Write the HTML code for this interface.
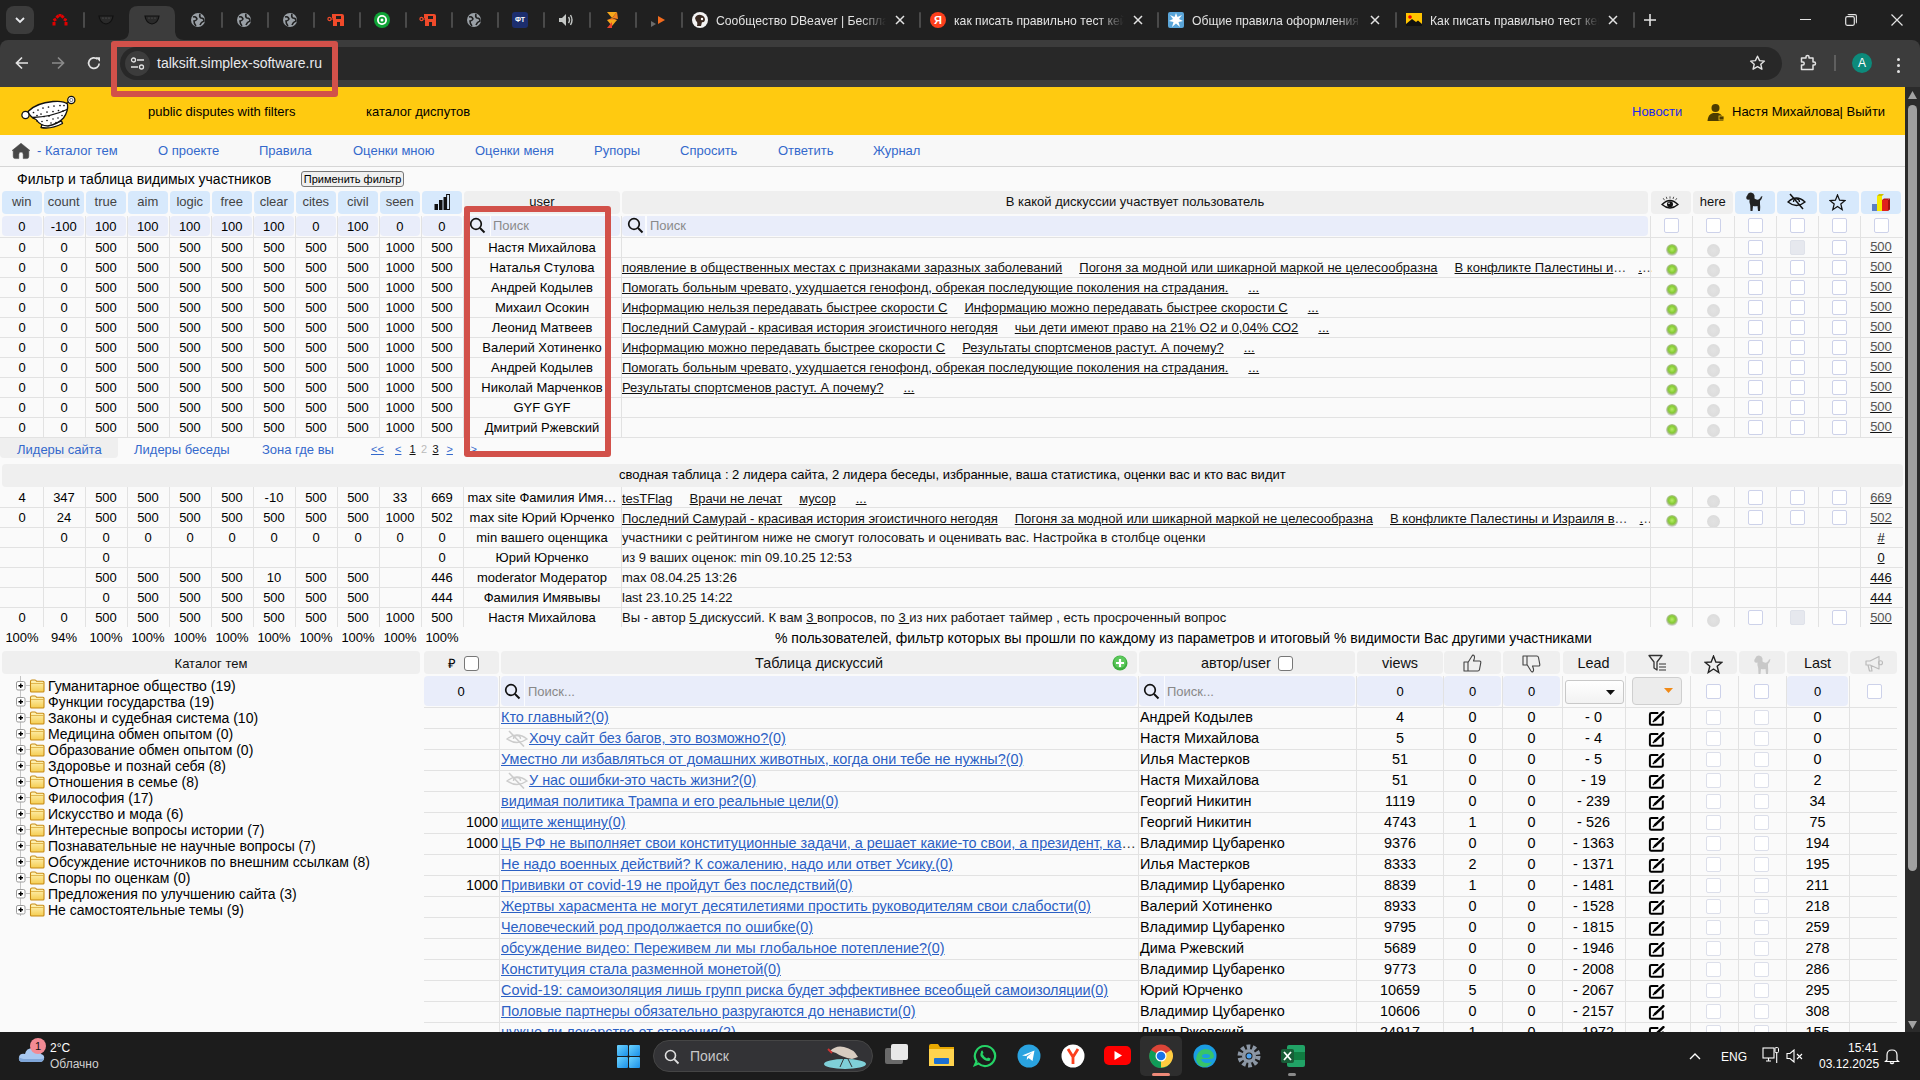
<!DOCTYPE html><html><head><meta charset="utf-8"><title>talksift</title><style>
*{box-sizing:border-box}
html,body{margin:0;padding:0}
body{width:1920px;height:1080px;overflow:hidden;position:relative;background:#fafafa;font-family:"Liberation Sans",sans-serif;color:#000}
div{position:absolute}
.t{white-space:nowrap}
.c{text-align:center;white-space:nowrap;overflow:hidden}
.u{text-decoration:underline}
.hb{background:#d7e9fc;border-radius:4px}
.hg{background:#efefef;border-radius:4px}
.fl{background:#e9edfa;border-radius:4px}
.vl{background:#e2e2e2;width:1px}
.hl{background:#e2e2e2;height:1px}
.cb{width:15px;height:15px;border:1px solid #cdd2ea;border-radius:2px;background:#fff}
.gd{width:12px;height:12px;border-radius:50%;background:radial-gradient(circle at 50% 45%,#b8ee6a 0,#86cc34 38%,#9fc070 52%,#d6d6d6 68%,#e4e4e4 100%)}
.gy{width:13px;height:13px;border-radius:50%;background:radial-gradient(circle at 50% 50%,#e2e2e2 0,#dcdcdc 70%,#e6e6e6 100%)}
a{color:inherit}
</style></head><body>
<div style="left:0px;top:0px;width:1920px;height:40px;background:#202020"></div>
<div style="left:6px;top:6px;width:28px;height:28px;background:#3c3c3c;border-radius:8px"></div>
<svg style="position:absolute;left:14px;top:15px" width="12" height="10" viewBox="0 0 12 10"><path d="M2 3 L6 7 L10 3" fill="none" stroke="#e8eaed" stroke-width="1.8"/></svg>
<svg style="position:absolute;left:120px;top:6px" width="64" height="34" viewBox="0 0 64 34"><path d="M0 34 Q8 34 9 26 L9 9 Q9 0 18 0 L46 0 Q55 0 55 9 L55 26 Q56 34 64 34 Z" fill="#3c3c3c"/></svg>
<div style="left:83px;top:12px;width:2px;height:16px;background:#4a4a4a;border-radius:1px"></div>
<div style="left:221px;top:12px;width:2px;height:16px;background:#4a4a4a;border-radius:1px"></div>
<div style="left:267px;top:12px;width:2px;height:16px;background:#4a4a4a;border-radius:1px"></div>
<div style="left:313px;top:12px;width:2px;height:16px;background:#4a4a4a;border-radius:1px"></div>
<div style="left:359px;top:12px;width:2px;height:16px;background:#4a4a4a;border-radius:1px"></div>
<div style="left:405px;top:12px;width:2px;height:16px;background:#4a4a4a;border-radius:1px"></div>
<div style="left:451px;top:12px;width:2px;height:16px;background:#4a4a4a;border-radius:1px"></div>
<div style="left:497px;top:12px;width:2px;height:16px;background:#4a4a4a;border-radius:1px"></div>
<div style="left:543px;top:12px;width:2px;height:16px;background:#4a4a4a;border-radius:1px"></div>
<div style="left:589px;top:12px;width:2px;height:16px;background:#4a4a4a;border-radius:1px"></div>
<div style="left:635px;top:12px;width:2px;height:16px;background:#4a4a4a;border-radius:1px"></div>
<div style="left:681px;top:12px;width:2px;height:16px;background:#4a4a4a;border-radius:1px"></div>
<div style="left:919px;top:12px;width:2px;height:16px;background:#4a4a4a;border-radius:1px"></div>
<div style="left:1157px;top:12px;width:2px;height:16px;background:#4a4a4a;border-radius:1px"></div>
<div style="left:1395px;top:12px;width:2px;height:16px;background:#4a4a4a;border-radius:1px"></div>
<div style="left:1633px;top:12px;width:2px;height:16px;background:#4a4a4a;border-radius:1px"></div>
<svg style="position:absolute;left:51px;top:13px" width="18" height="13" viewBox="0 0 18 13"><g fill="#e00000"><rect x="1.5" y="9" width="3" height="3.5"/><rect x="13.5" y="9" width="3" height="3.5"/><rect x="2.3" y="5.2" width="3" height="3" transform="rotate(-30 3.8 6.7)"/><rect x="12.7" y="5.2" width="3" height="3" transform="rotate(30 14.2 6.7)"/><rect x="5" y="2.2" width="3" height="3" transform="rotate(-45 6.5 3.7)"/><rect x="10" y="2.2" width="3" height="3" transform="rotate(45 11.5 3.7)"/><rect x="7.5" y="1" width="3" height="2.6"/></g></svg>
<svg style="position:absolute;left:98px;top:14px" width="16" height="11" viewBox="0 0 16 11"><path d="M1 2 L15 2 Q14 9 8 10 Q2 9 1 2 Z" fill="#2a2a2a" stroke="#111" stroke-width="1.2"/><circle cx="5" cy="4" r="0.6" fill="#666"/><circle cx="8" cy="4" r="0.6" fill="#666"/><circle cx="11" cy="4" r="0.6" fill="#666"/></svg>
<svg style="position:absolute;left:144px;top:14px" width="16" height="11" viewBox="0 0 16 11"><path d="M1 2 L15 2 Q14 9 8 10 Q2 9 1 2 Z" fill="#2a2a2a" stroke="#111" stroke-width="1.2"/><circle cx="5" cy="4" r="0.6" fill="#666"/><circle cx="8" cy="4" r="0.6" fill="#666"/><circle cx="11" cy="4" r="0.6" fill="#666"/></svg>
<svg style="position:absolute;left:191px;top:13px" width="14" height="14" viewBox="0 0 14 14"><circle cx="7" cy="7" r="7" fill="#9aa0a6"/><path d="M2 4 Q5 3 6 6 Q5 8 3 8 Q3 11 5 13 M9 1 Q8 4 10 5 Q13 5 13 8 Q10 9 9 12" fill="none" stroke="#202020" stroke-width="1.6"/></svg>
<svg style="position:absolute;left:237px;top:13px" width="14" height="14" viewBox="0 0 14 14"><circle cx="7" cy="7" r="7" fill="#9aa0a6"/><path d="M2 4 Q5 3 6 6 Q5 8 3 8 Q3 11 5 13 M9 1 Q8 4 10 5 Q13 5 13 8 Q10 9 9 12" fill="none" stroke="#202020" stroke-width="1.6"/></svg>
<svg style="position:absolute;left:283px;top:13px" width="14" height="14" viewBox="0 0 14 14"><circle cx="7" cy="7" r="7" fill="#9aa0a6"/><path d="M2 4 Q5 3 6 6 Q5 8 3 8 Q3 11 5 13 M9 1 Q8 4 10 5 Q13 5 13 8 Q10 9 9 12" fill="none" stroke="#202020" stroke-width="1.6"/></svg>
<svg style="position:absolute;left:467px;top:13px" width="14" height="14" viewBox="0 0 14 14"><circle cx="7" cy="7" r="7" fill="#9aa0a6"/><path d="M2 4 Q5 3 6 6 Q5 8 3 8 Q3 11 5 13 M9 1 Q8 4 10 5 Q13 5 13 8 Q10 9 9 12" fill="none" stroke="#202020" stroke-width="1.6"/></svg>
<svg style="position:absolute;left:327px;top:12px" width="18" height="15" viewBox="0 0 18 15"><path d="M5 2 L15 2 Q17 2 17 4 L17 14 L13 14 L13 10 L10 10 L10 14 L6 14 L6 6 L5 6 Z" fill="#f04a2a"/><circle cx="2.5" cy="7" r="1.6" fill="none" stroke="#f04a2a" stroke-width="1.2"/><path d="M4 7 L6 7" stroke="#f04a2a" stroke-width="1.2"/><rect x="9" y="4" width="5" height="3" fill="#202020"/></svg>
<svg style="position:absolute;left:419px;top:12px" width="18" height="15" viewBox="0 0 18 15"><path d="M5 2 L15 2 Q17 2 17 4 L17 14 L13 14 L13 10 L10 10 L10 14 L6 14 L6 6 L5 6 Z" fill="#f04a2a"/><circle cx="2.5" cy="7" r="1.6" fill="none" stroke="#f04a2a" stroke-width="1.2"/><path d="M4 7 L6 7" stroke="#f04a2a" stroke-width="1.2"/><rect x="9" y="4" width="5" height="3" fill="#202020"/></svg>
<svg style="position:absolute;left:374px;top:12px" width="16" height="16" viewBox="0 0 16 16"><circle cx="8" cy="8" r="8" fill="#0fa336"/><circle cx="8" cy="8" r="5" fill="#fff"/><circle cx="8" cy="8" r="3.2" fill="#0fa336"/><circle cx="8" cy="8" r="1.5" fill="#fff"/></svg>
<div style="left:512px;top:12px;width:16px;height:16px;background:#1c2e6e;border-radius:3px"><div style="left:0;top:3px;width:16px;font-size:7px;font-weight:bold;color:#fff;text-align:center;line-height:9px">ФТ</div></div>
<svg style="position:absolute;left:558px;top:13px" width="16" height="14" viewBox="0 0 16 14"><path d="M1 5 L4 5 L8 1 L8 13 L4 9 L1 9 Z" fill="#c4c7c5"/><path d="M10.5 4 Q12.5 7 10.5 10 M12.5 2 Q15.5 7 12.5 12" fill="none" stroke="#c4c7c5" stroke-width="1.4"/></svg>
<svg style="position:absolute;left:604px;top:11px" width="16" height="18" viewBox="0 0 16 18"><path d="M3 1 L13 1 L8 7 Z" fill="#f7a81b"/><path d="M8 7 L13 1 L14 8 Z" fill="#f58220"/><path d="M3 9 L13 9 L8 15 Z" fill="#f7a81b"/><path d="M3 17 L8 11 L8 17 Z" fill="#e8412c"/><path d="M8 7 L3 9 L13 9Z" fill="#f58220"/></svg>
<svg style="position:absolute;left:650px;top:12px" width="16" height="16" viewBox="0 0 16 16"><path d="M1 9 L6 12 L1 15 Z" fill="#6b6b6b"/><path d="M8 4 L15 8 L8 12 Z" fill="#f26b1d"/></svg>
<svg style="position:absolute;left:692px;top:12px" width="16" height="16" viewBox="0 0 16 16"><circle cx="8" cy="8" r="8" fill="#f3f3f3"/><path d="M3 6 Q5 2 9 3 Q13 4 13 8 Q12 11 10 10 L9 14 L5 14 Q6 10 4 9Z" fill="#3a2a22"/><circle cx="10" cy="7" r="1.2" fill="#fff"/></svg>
<div class="t" style="left:716px;top:13px;width:170px;overflow:hidden;font-size:12.2px;line-height:16px;color:#e3e3e3;-webkit-mask-image:linear-gradient(90deg,#000 85%,transparent 100%)">Сообщество DBeaver | Бесплат</div>
<svg style="position:absolute;left:895px;top:15px" width="10" height="10" viewBox="0 0 10 10"><path d="M1 1 L9 9 M9 1 L1 9" stroke="#e3e3e3" stroke-width="1.5"/></svg>
<div style="left:930px;top:12px;width:16px;height:16px;border-radius:50%;background:#fc3f1d;color:#fff;font-size:11px;line-height:16px;text-align:center;font-weight:bold">Я</div>
<div class="t" style="left:954px;top:13px;width:170px;overflow:hidden;font-size:12.2px;line-height:16px;color:#e3e3e3;-webkit-mask-image:linear-gradient(90deg,#000 85%,transparent 100%)">как писать правильно тест кей</div>
<svg style="position:absolute;left:1133px;top:15px" width="10" height="10" viewBox="0 0 10 10"><path d="M1 1 L9 9 M9 1 L1 9" stroke="#e3e3e3" stroke-width="1.5"/></svg>
<div style="left:1168px;top:12px;width:16px;height:16px;border-radius:2px;background:#5aa5d8"></div>
<svg style="position:absolute;left:1169px;top:13px" width="14" height="14" viewBox="0 0 14 14"><path d="M7 0 L8.5 4 L13 2 L10 6 L14 8 L9.5 9 L11 14 L7 10.5 L3 14 L4.5 9 L0 8 L4 6 L1 2 L5.5 4Z" fill="#fff"/></svg>
<div class="t" style="left:1192px;top:13px;width:169px;overflow:hidden;font-size:12.2px;line-height:16px;color:#e3e3e3;-webkit-mask-image:linear-gradient(90deg,#000 85%,transparent 100%)">Общие правила оформления т</div>
<svg style="position:absolute;left:1370px;top:15px" width="10" height="10" viewBox="0 0 10 10"><path d="M1 1 L9 9 M9 1 L1 9" stroke="#e3e3e3" stroke-width="1.5"/></svg>
<div style="left:1406px;top:13px;width:16px;height:13px;background:#ffc400"></div>
<svg style="position:absolute;left:1406px;top:13px" width="16" height="13" viewBox="0 0 16 13"><path d="M0 13 L0 11 L6 6 L10 9 L12 7.5 L16 11 L16 13Z" fill="#111"/><circle cx="4" cy="4" r="1.8" fill="#e00"/></svg>
<div class="t" style="left:1430px;top:13px;width:169px;overflow:hidden;font-size:12.2px;line-height:16px;color:#e3e3e3;-webkit-mask-image:linear-gradient(90deg,#000 85%,transparent 100%)">Как писать правильно тест кей</div>
<svg style="position:absolute;left:1608px;top:15px" width="10" height="10" viewBox="0 0 10 10"><path d="M1 1 L9 9 M9 1 L1 9" stroke="#e3e3e3" stroke-width="1.5"/></svg>
<svg style="position:absolute;left:1644px;top:14px" width="12" height="12" viewBox="0 0 12 12"><path d="M6 0 V12 M0 6 H12" stroke="#e3e3e3" stroke-width="1.6"/></svg>
<div style="left:1800px;top:19px;width:11px;height:1px;background:#e3e3e3"></div>
<svg style="position:absolute;left:1845px;top:14px" width="12" height="12" viewBox="0 0 12 12"><rect x="0.7" y="2.7" width="8.6" height="8.6" rx="1.5" fill="none" stroke="#e3e3e3" stroke-width="1.2"/><path d="M3 1 Q3 0.6 4 0.6 L10 0.6 Q11.4 0.6 11.4 2 L11.4 8 Q11.4 9 11 9" fill="none" stroke="#e3e3e3" stroke-width="1.1"/></svg>
<svg style="position:absolute;left:1891px;top:14px" width="12" height="12" viewBox="0 0 12 12"><path d="M0.5 0.5 L11.5 11.5 M11.5 0.5 L0.5 11.5" stroke="#e3e3e3" stroke-width="1.2"/></svg>
<div style="left:0px;top:40px;width:1920px;height:47px;background:#202020"></div>
<div style="left:0px;top:40px;width:1920px;height:47px;background:#3c3c3c;border-radius:8px 8px 0 0"></div>
<svg style="position:absolute;left:14px;top:55px" width="16" height="16" viewBox="0 0 16 16"><path d="M14 8 H2.5 M8 2.5 L2.5 8 L8 13.5" fill="none" stroke="#e3e3e3" stroke-width="1.7"/></svg>
<svg style="position:absolute;left:50px;top:55px" width="16" height="16" viewBox="0 0 16 16"><path d="M2 8 H13.5 M8 2.5 L13.5 8 L8 13.5" fill="none" stroke="#8a8a8a" stroke-width="1.7"/></svg>
<svg style="position:absolute;left:86px;top:55px" width="16" height="16" viewBox="0 0 16 16"><path d="M13.2 8.5 A5.3 5.3 0 1 1 11.5 4.2" fill="none" stroke="#e3e3e3" stroke-width="1.7"/><path d="M9.5 2.2 L14 2.2 L14 6.7 Z" fill="#e3e3e3"/></svg>
<div style="left:120px;top:47px;width:1662px;height:33px;background:#282828;border-radius:17px"></div>
<div style="left:125px;top:51px;width:25px;height:25px;background:#3c3c3c;border-radius:50%"></div>
<svg style="position:absolute;left:130px;top:56px" width="15" height="15" viewBox="0 0 15 15"><circle cx="3.5" cy="4" r="2" fill="none" stroke="#e3e3e3" stroke-width="1.3"/><path d="M7 4 H14" stroke="#e3e3e3" stroke-width="1.5"/><circle cx="11.5" cy="11" r="2" fill="none" stroke="#e3e3e3" stroke-width="1.3"/><path d="M1 11 H8" stroke="#e3e3e3" stroke-width="1.5"/></svg>
<div class="t" style="left:157px;top:54px;font-size:14px;line-height:18px;color:#e8eaed">talksift.simplex-software.ru</div>
<svg style="position:absolute;left:1749px;top:55px" width="17" height="16" viewBox="0 0 17 16"><path d="M8.5 1.2 L10.6 5.6 L15.4 6.1 L11.8 9.3 L12.9 14.2 L8.5 11.7 L4.1 14.2 L5.2 9.3 L1.6 6.1 L6.4 5.6 Z" fill="none" stroke="#e3e3e3" stroke-width="1.4" stroke-linejoin="round"/></svg>
<svg style="position:absolute;left:1800px;top:54px" width="18" height="18" viewBox="0 0 18 18"><path d="M1.5 4 H6 V2.8 Q6 1.5 7.5 1.5 Q9 1.5 9 2.8 V4 H13 V8 H14.2 Q15.5 8 15.5 9.5 Q15.5 11 14.2 11 H13 V15.5 H1.5 V11 H3 Q4.2 11 4.2 9.5 Q4.2 8 3 8 H1.5 Z" fill="none" stroke="#e3e3e3" stroke-width="1.5" stroke-linejoin="round"/></svg>
<div style="left:1834px;top:55px;width:2px;height:16px;background:#5f5f5f"></div>
<div style="left:1852px;top:53px;width:20px;height:20px;background:#0d8a7b;border-radius:50%;color:#fff;font-size:12px;line-height:20px;text-align:center">A</div>
<div style="left:1896.5px;top:57.5px;width:3.2px;height:3.2px;background:#e3e3e3;border-radius:50%"></div>
<div style="left:1896.5px;top:63.5px;width:3.2px;height:3.2px;background:#e3e3e3;border-radius:50%"></div>
<div style="left:1896.5px;top:69.5px;width:3.2px;height:3.2px;background:#e3e3e3;border-radius:50%"></div>
<div style="left:0px;top:87px;width:1905px;height:48px;background:#ffca10"></div>
<svg style="position:absolute;left:15px;top:90px" width="70" height="45" viewBox="0 0 70 45">
<g stroke="#111" stroke-width="1.3" fill="#fff" stroke-linejoin="round">
<path d="M26 37.5 Q36 39.5 47.5 33.5 L46.5 31 Q37 35.5 27 34.5 Z"/>
<circle cx="10.5" cy="25" r="3.6"/>
<circle cx="56.3" cy="10" r="3.6"/>
<path d="M13 21.5 Q21 13 38 11.5 Q49 10.5 52.5 14 Q53.5 21 48.5 28 Q43 34 33 36 Q25 35.5 21 29.5 Q15 27 13 21.5 Z"/>
<path d="M17.5 27.5 Q36 27 52 19.5" fill="none"/>
<path d="M51 13.5 L54 12" fill="none"/>
</g>
<circle cx="9.5" cy="25.5" r="1.6" fill="#fff"/>
<circle cx="56.3" cy="10" r="1.6" fill="none" stroke="#555" stroke-width="0.8"/>
<g fill="#111">
<circle cx="18.5" cy="22.5" r="0.85"/><circle cx="23" cy="20" r="0.85"/><circle cx="28" cy="18" r="0.85"/><circle cx="33.5" cy="17" r="0.85"/><circle cx="39" cy="16" r="0.85"/><circle cx="45" cy="15.5" r="0.85"/><circle cx="49" cy="15.5" r="0.85"/>
<circle cx="22" cy="25.5" r="0.85"/><circle cx="26" cy="24" r="0.85"/><circle cx="32" cy="22" r="0.85"/><circle cx="38" cy="21.5" r="0.85"/><circle cx="43.5" cy="20.5" r="0.85"/><circle cx="48" cy="21" r="0.85"/><circle cx="29" cy="26.5" r="0.85"/><circle cx="34" cy="26" r="0.85"/>
<circle cx="22" cy="31" r="0.8"/><circle cx="27" cy="31.5" r="0.8"/><circle cx="32" cy="30.5" r="0.8"/><circle cx="38" cy="29" r="0.8"/><circle cx="43" cy="28" r="0.8"/><circle cx="47" cy="25.5" r="0.8"/><circle cx="36" cy="33" r="0.8"/><circle cx="41" cy="32.5" r="0.8"/>
</g></svg>
<div class="t" style="left:148px;top:104px;font-size:13px;line-height:16px;color:#000">public disputes with filters</div>
<div class="t" style="left:366px;top:104px;font-size:13px;line-height:16px;color:#000">каталог диспутов</div>
<div class="t" style="left:1632px;top:104px;font-size:13px;line-height:16px;color:#1c28ec">Новости</div>
<svg style="position:absolute;left:1707px;top:103px" width="18" height="18" viewBox="0 0 18 18"><circle cx="8.5" cy="5" r="4" fill="#4d3c00"/><path d="M0.5 18 Q1 11 6 10 L11 10 Q16 11 16.5 18Z" fill="#4d3c00"/><rect x="12" y="13" width="5" height="4" fill="#4d3c00" stroke="#ffca10" stroke-width="0.8"/></svg>
<div class="t" style="left:1732px;top:104px;font-size:13px;line-height:16px;color:#000">Настя Михайлова| Выйти</div>
<div style="left:0px;top:135px;width:1905px;height:32px;background:#f8f8f8;border-bottom:1px solid #d6d6d6"></div>
<svg style="position:absolute;left:11px;top:142px" width="20" height="18" viewBox="0 0 20 18"><path d="M10 1.2 L19 8.6 L17.8 8.6 L17.8 14.4 Q17.8 16.6 15.6 16.6 L12.2 16.6 L12.2 12.4 Q12.2 10.1 10 10.1 Q7.8 10.1 7.8 12.4 L7.8 16.6 L4.4 16.6 Q2.2 16.6 2.2 14.4 L2.2 8.6 L1 8.6 Z" fill="#484848" stroke="#484848" stroke-width="0.5" stroke-linejoin="round"/></svg>
<div class="t" style="left:37px;top:143px;font-size:13px;line-height:16px;color:#3469cc">- Каталог тем</div>
<div class="t" style="left:158px;top:143px;font-size:13px;line-height:16px;color:#3469cc">О проекте</div>
<div class="t" style="left:259px;top:143px;font-size:13px;line-height:16px;color:#3469cc">Правила</div>
<div class="t" style="left:353px;top:143px;font-size:13px;line-height:16px;color:#3469cc">Оценки мною</div>
<div class="t" style="left:475px;top:143px;font-size:13px;line-height:16px;color:#3469cc">Оценки меня</div>
<div class="t" style="left:594px;top:143px;font-size:13px;line-height:16px;color:#3469cc">Рупоры</div>
<div class="t" style="left:680px;top:143px;font-size:13px;line-height:16px;color:#3469cc">Спросить</div>
<div class="t" style="left:778px;top:143px;font-size:13px;line-height:16px;color:#3469cc">Ответить</div>
<div class="t" style="left:873px;top:143px;font-size:13px;line-height:16px;color:#3469cc">Журнал</div>
<div class="t" style="left:17px;top:171px;font-size:14px;line-height:16px">Фильтр и таблица видимых участников</div>
<div class="c" style="left:301px;top:171px;width:103px;height:16px;line-height:14px;font-size:11px;border:1px solid #777;border-radius:3px;background:#efefef;color:#000">Применить фильтр</div>
<div class="hb" style="left:2px;top:191px;width:39.5px;height:23px;"></div>
<div class="c" style="left:2px;top:191px;width:39.5px;height:21px;line-height:21px;font-size:13px;color:#444">win</div>
<div class="hb" style="left:44px;top:191px;width:39.5px;height:23px;"></div>
<div class="c" style="left:44px;top:191px;width:39.5px;height:21px;line-height:21px;font-size:13px;color:#444">count</div>
<div class="hb" style="left:86px;top:191px;width:39.5px;height:23px;"></div>
<div class="c" style="left:86px;top:191px;width:39.5px;height:21px;line-height:21px;font-size:13px;color:#444">true</div>
<div class="hb" style="left:128px;top:191px;width:39.5px;height:23px;"></div>
<div class="c" style="left:128px;top:191px;width:39.5px;height:21px;line-height:21px;font-size:13px;color:#444">aim</div>
<div class="hb" style="left:170px;top:191px;width:39.5px;height:23px;"></div>
<div class="c" style="left:170px;top:191px;width:39.5px;height:21px;line-height:21px;font-size:13px;color:#444">logic</div>
<div class="hb" style="left:212px;top:191px;width:39.5px;height:23px;"></div>
<div class="c" style="left:212px;top:191px;width:39.5px;height:21px;line-height:21px;font-size:13px;color:#444">free</div>
<div class="hb" style="left:254px;top:191px;width:39.5px;height:23px;"></div>
<div class="c" style="left:254px;top:191px;width:39.5px;height:21px;line-height:21px;font-size:13px;color:#444">clear</div>
<div class="hb" style="left:296px;top:191px;width:39.5px;height:23px;"></div>
<div class="c" style="left:296px;top:191px;width:39.5px;height:21px;line-height:21px;font-size:13px;color:#444">cites</div>
<div class="hb" style="left:338px;top:191px;width:39.5px;height:23px;"></div>
<div class="c" style="left:338px;top:191px;width:39.5px;height:21px;line-height:21px;font-size:13px;color:#444">civil</div>
<div class="hb" style="left:380px;top:191px;width:39.5px;height:23px;"></div>
<div class="c" style="left:380px;top:191px;width:39.5px;height:21px;line-height:21px;font-size:13px;color:#444">seen</div>
<div class="hb" style="left:422px;top:191px;width:39.5px;height:23px;"></div>
<svg style="position:absolute;left:434px;top:194px" width="16" height="16" viewBox="0 0 16 16"><rect x="0.5" y="10" width="3.5" height="6" fill="#111"/><rect x="5" y="6" width="3.5" height="10" fill="#111"/><rect x="9.5" y="3" width="3.5" height="13" fill="#111"/><rect x="12.6" y="0.5" width="3" height="15" fill="none" stroke="#111" stroke-width="1"/></svg>
<div class="hg" style="left:464px;top:191px;width:156px;height:23px;"></div>
<div class="c" style="left:464px;top:191px;width:156px;height:21px;line-height:21px;font-size:13px;color:#111">user</div>
<div class="hg" style="left:622px;top:191px;width:1026px;height:23px;"></div>
<div class="c" style="left:622px;top:191px;width:1026px;height:21px;line-height:21px;font-size:13px;color:#111">В какой дискуссии участвует пользователь</div>
<div class="hg" style="left:1651px;top:191px;width:39.5px;height:23px;"></div>
<div class="hg" style="left:1693px;top:191px;width:39.5px;height:23px;"></div>
<div class="hb" style="left:1735px;top:191px;width:39.5px;height:23px;"></div>
<div class="hb" style="left:1777px;top:191px;width:39.5px;height:23px;"></div>
<div class="hb" style="left:1819px;top:191px;width:39.5px;height:23px;"></div>
<div class="hb" style="left:1861px;top:191px;width:39.5px;height:23px;"></div>
<svg style="position:absolute;left:1661px;top:196px" width="18" height="13" viewBox="0 0 18 13"><path d="M1 8.5 Q9 0.5 17 8.5 Q9 15.5 1 8.5Z" fill="none" stroke="#111" stroke-width="1.3"/><circle cx="9" cy="8.3" r="3" fill="#111"/><circle cx="8" cy="7.3" r="0.8" fill="#fff"/><path d="M3.5 4.2 L2.2 2.2 M6 3 L5.3 0.8 M9 2.6 V0.4 M12 3 L12.7 0.8 M14.5 4.2 L15.8 2.2" stroke="#111" stroke-width="0.7"/></svg>
<div class="c" style="left:1693px;top:191px;width:39.5px;height:21px;line-height:21px;font-size:13px;color:#111">here</div>
<svg style="position:absolute;left:1745px;top:192px" width="18" height="20" viewBox="0 0 18 20"><path d="M2.5 3 Q3 0.5 6 0.5 Q9 0.8 9.5 3.5 L9.5 6.5 Q11 8 13.5 7.5 Q15.5 6.5 16 4.5 L17.5 4.2 Q17 7 15 9 L15 12 Q15.5 15 15 19 L13 19 L12.5 14 Q10 14.5 8 14 L7.5 19 L5.5 19 L5.2 13 Q4 10 4.5 7.5 Q2.5 8 1.5 7 Q0.5 5 2.5 3Z" fill="#222"/></svg>
<svg style="position:absolute;left:1787px;top:193px" width="19" height="17" viewBox="0 0 19 17"><path d="M1 9 Q9.5 1 18 9 Q9.5 16 1 9Z" fill="none" stroke="#111" stroke-width="1.3"/><path d="M6.5 9 Q6.5 5.8 9.5 5.8 Q12.5 5.8 12.5 9" fill="none" stroke="#111" stroke-width="1.3"/><path d="M3 1 L16 16" stroke="#111" stroke-width="1.5"/></svg>
<svg style="position:absolute;left:1829px;top:194px" width="17" height="17" viewBox="0 0 18 18"><path d="M9 1 L11.2 6.6 L17 6.9 L12.5 10.6 L14 16.6 L9 13.3 L4 16.6 L5.5 10.6 L1 6.9 L6.8 6.6 Z" fill="none" stroke="#111" stroke-width="1.3" stroke-linejoin="miter"/></svg>
<svg style="position:absolute;left:1871px;top:194px" width="20" height="17" viewBox="0 0 20 17"><rect x="1" y="10" width="5" height="7" fill="#5b7fc4"/><rect x="6" y="2" width="5" height="15" fill="#f6ea00"/><path d="M6 2 L8 0 L13 0 L11 2Z" fill="#cfc000"/><rect x="11" y="6" width="6" height="11" fill="#e0201c"/><path d="M17 6 L19 4.5 L19 15.5 L17 17Z" fill="#a01010"/><path d="M11 6 L13 4.5 L19 4.5 L17 6Z" fill="#b81818"/></svg>
<div class="fl" style="left:2px;top:216px;width:39.5px;height:20px;"></div>
<div class="c" style="left:2px;top:216px;width:39.5px;height:20px;line-height:20px;font-size:13px;line-height:21px">0</div>
<div class="fl" style="left:44px;top:216px;width:39.5px;height:20px;"></div>
<div class="c" style="left:44px;top:216px;width:39.5px;height:20px;line-height:20px;font-size:13px;line-height:21px">-100</div>
<div class="fl" style="left:86px;top:216px;width:39.5px;height:20px;"></div>
<div class="c" style="left:86px;top:216px;width:39.5px;height:20px;line-height:20px;font-size:13px;line-height:21px">100</div>
<div class="fl" style="left:128px;top:216px;width:39.5px;height:20px;"></div>
<div class="c" style="left:128px;top:216px;width:39.5px;height:20px;line-height:20px;font-size:13px;line-height:21px">100</div>
<div class="fl" style="left:170px;top:216px;width:39.5px;height:20px;"></div>
<div class="c" style="left:170px;top:216px;width:39.5px;height:20px;line-height:20px;font-size:13px;line-height:21px">100</div>
<div class="fl" style="left:212px;top:216px;width:39.5px;height:20px;"></div>
<div class="c" style="left:212px;top:216px;width:39.5px;height:20px;line-height:20px;font-size:13px;line-height:21px">100</div>
<div class="fl" style="left:254px;top:216px;width:39.5px;height:20px;"></div>
<div class="c" style="left:254px;top:216px;width:39.5px;height:20px;line-height:20px;font-size:13px;line-height:21px">100</div>
<div class="fl" style="left:296px;top:216px;width:39.5px;height:20px;"></div>
<div class="c" style="left:296px;top:216px;width:39.5px;height:20px;line-height:20px;font-size:13px;line-height:21px">0</div>
<div class="fl" style="left:338px;top:216px;width:39.5px;height:20px;"></div>
<div class="c" style="left:338px;top:216px;width:39.5px;height:20px;line-height:20px;font-size:13px;line-height:21px">100</div>
<div class="fl" style="left:380px;top:216px;width:39.5px;height:20px;"></div>
<div class="c" style="left:380px;top:216px;width:39.5px;height:20px;line-height:20px;font-size:13px;line-height:21px">0</div>
<div class="fl" style="left:422px;top:216px;width:39.5px;height:20px;"></div>
<div class="c" style="left:422px;top:216px;width:39.5px;height:20px;line-height:20px;font-size:13px;line-height:21px">0</div>
<div class="fl" style="left:464px;top:216px;width:156px;height:20px;"></div>
<div style="left:489.5px;top:216px;width:1.5px;height:20px;background:#fff;opacity:.8"></div>
<svg style="position:absolute;left:469px;top:217px" width="17" height="17" viewBox="0 0 17 17"><circle cx="7" cy="7" r="5.3" fill="none" stroke="#111" stroke-width="1.7"/><path d="M11 11 L15.5 15.5" stroke="#111" stroke-width="2"/></svg>
<div class="t" style="left:493px;top:218px;font-size:13px;line-height:16px;color:#8a8a8a">Поиск</div>
<div class="fl" style="left:622px;top:216px;width:1026px;height:20px;"></div>
<svg style="position:absolute;left:627px;top:217px" width="17" height="17" viewBox="0 0 17 17"><circle cx="7" cy="7" r="5.3" fill="none" stroke="#111" stroke-width="1.7"/><path d="M11 11 L15.5 15.5" stroke="#111" stroke-width="2"/></svg>
<div style="left:645px;top:216px;width:1.5px;height:20px;background:#fff;opacity:.8"></div>
<div class="t" style="left:650px;top:218px;font-size:13px;line-height:16px;color:#8a8a8a">Поиск</div>
<div class="cb" style="left:1664px;top:218px"></div>
<div class="cb" style="left:1706px;top:218px"></div>
<div class="cb" style="left:1748px;top:218px"></div>
<div class="cb" style="left:1790px;top:218px"></div>
<div class="cb" style="left:1832px;top:218px"></div>
<div class="cb" style="left:1874px;top:218px"></div>
<div class="hl" style="left:0px;top:237px;width:1903px;height:1px;"></div>
<div class="c" style="left:1px;top:237px;width:42px;height:21px;line-height:21px;font-size:13px">0</div>
<div class="c" style="left:43px;top:237px;width:42px;height:21px;line-height:21px;font-size:13px">0</div>
<div class="c" style="left:85px;top:237px;width:42px;height:21px;line-height:21px;font-size:13px">500</div>
<div class="c" style="left:127px;top:237px;width:42px;height:21px;line-height:21px;font-size:13px">500</div>
<div class="c" style="left:169px;top:237px;width:42px;height:21px;line-height:21px;font-size:13px">500</div>
<div class="c" style="left:211px;top:237px;width:42px;height:21px;line-height:21px;font-size:13px">500</div>
<div class="c" style="left:253px;top:237px;width:42px;height:21px;line-height:21px;font-size:13px">500</div>
<div class="c" style="left:295px;top:237px;width:42px;height:21px;line-height:21px;font-size:13px">500</div>
<div class="c" style="left:337px;top:237px;width:42px;height:21px;line-height:21px;font-size:13px">500</div>
<div class="c" style="left:379px;top:237px;width:42px;height:21px;line-height:21px;font-size:13px">1000</div>
<div class="c" style="left:421px;top:237px;width:42px;height:21px;line-height:21px;font-size:13px">500</div>
<div class="c" style="left:464px;top:237px;width:156px;height:21px;line-height:21px;font-size:13px">Настя Михайлова</div>
<div class="gd" style="left:1666px;top:244px"></div>
<div class="gy" style="left:1707px;top:244px"></div>
<div class="cb" style="left:1748px;top:240px;"></div>
<div class="cb" style="left:1790px;top:240px;background:#e6e8ee;border-color:#dfe2ea"></div>
<div class="cb" style="left:1832px;top:240px;"></div>
<div class="c" style="left:1860px;top:237px;width:42px;height:20px;line-height:20px;font-size:13px"><span class="u" style="color:#555;text-decoration-color:#111">500</span></div>
<div class="hl" style="left:0px;top:257px;width:1903px;height:1px;"></div>
<div class="c" style="left:1px;top:257px;width:42px;height:21px;line-height:21px;font-size:13px">0</div>
<div class="c" style="left:43px;top:257px;width:42px;height:21px;line-height:21px;font-size:13px">0</div>
<div class="c" style="left:85px;top:257px;width:42px;height:21px;line-height:21px;font-size:13px">500</div>
<div class="c" style="left:127px;top:257px;width:42px;height:21px;line-height:21px;font-size:13px">500</div>
<div class="c" style="left:169px;top:257px;width:42px;height:21px;line-height:21px;font-size:13px">500</div>
<div class="c" style="left:211px;top:257px;width:42px;height:21px;line-height:21px;font-size:13px">500</div>
<div class="c" style="left:253px;top:257px;width:42px;height:21px;line-height:21px;font-size:13px">500</div>
<div class="c" style="left:295px;top:257px;width:42px;height:21px;line-height:21px;font-size:13px">500</div>
<div class="c" style="left:337px;top:257px;width:42px;height:21px;line-height:21px;font-size:13px">500</div>
<div class="c" style="left:379px;top:257px;width:42px;height:21px;line-height:21px;font-size:13px">1000</div>
<div class="c" style="left:421px;top:257px;width:42px;height:21px;line-height:21px;font-size:13px">500</div>
<div class="c" style="left:464px;top:257px;width:156px;height:21px;line-height:21px;font-size:13px">Наталья Стулова</div>
<div class="t" style="left:622px;top:257px;width:1030px;height:21px;line-height:22px;font-size:13px;overflow:hidden;color:#111"><span class="u" style="margin-right:17px">появление в общественных местах с признаками заразных заболеваний</span><span class="u" style="margin-right:17px">Погоня за модной или шикарной маркой не целесообразна</span><span class="u">В конфликте Палестины и</span><span style="color:#444;margin-right:12px">…</span><span class="u">.</span><span style="color:#444">…</span></div>
<div class="gd" style="left:1666px;top:264px"></div>
<div class="gy" style="left:1707px;top:264px"></div>
<div class="cb" style="left:1748px;top:260px;"></div>
<div class="cb" style="left:1790px;top:260px;"></div>
<div class="cb" style="left:1832px;top:260px;"></div>
<div class="c" style="left:1860px;top:257px;width:42px;height:20px;line-height:20px;font-size:13px"><span class="u" style="color:#555;text-decoration-color:#111">500</span></div>
<div class="hl" style="left:0px;top:277px;width:1903px;height:1px;"></div>
<div class="c" style="left:1px;top:277px;width:42px;height:21px;line-height:21px;font-size:13px">0</div>
<div class="c" style="left:43px;top:277px;width:42px;height:21px;line-height:21px;font-size:13px">0</div>
<div class="c" style="left:85px;top:277px;width:42px;height:21px;line-height:21px;font-size:13px">500</div>
<div class="c" style="left:127px;top:277px;width:42px;height:21px;line-height:21px;font-size:13px">500</div>
<div class="c" style="left:169px;top:277px;width:42px;height:21px;line-height:21px;font-size:13px">500</div>
<div class="c" style="left:211px;top:277px;width:42px;height:21px;line-height:21px;font-size:13px">500</div>
<div class="c" style="left:253px;top:277px;width:42px;height:21px;line-height:21px;font-size:13px">500</div>
<div class="c" style="left:295px;top:277px;width:42px;height:21px;line-height:21px;font-size:13px">500</div>
<div class="c" style="left:337px;top:277px;width:42px;height:21px;line-height:21px;font-size:13px">500</div>
<div class="c" style="left:379px;top:277px;width:42px;height:21px;line-height:21px;font-size:13px">1000</div>
<div class="c" style="left:421px;top:277px;width:42px;height:21px;line-height:21px;font-size:13px">500</div>
<div class="c" style="left:464px;top:277px;width:156px;height:21px;line-height:21px;font-size:13px">Андрей Кодылев</div>
<div class="t" style="left:622px;top:277px;width:1030px;height:21px;line-height:22px;font-size:13px;overflow:hidden;color:#111"><span class="u" style="margin-right:17px">Помогать больным чревато, ухудшается генофонд, обрекая последующие поколения на страдания.</span><span class="u" style="margin-left:3px;margin-right:17px">...</span></div>
<div class="gd" style="left:1666px;top:284px"></div>
<div class="gy" style="left:1707px;top:284px"></div>
<div class="cb" style="left:1748px;top:280px;"></div>
<div class="cb" style="left:1790px;top:280px;"></div>
<div class="cb" style="left:1832px;top:280px;"></div>
<div class="c" style="left:1860px;top:277px;width:42px;height:20px;line-height:20px;font-size:13px"><span class="u" style="color:#555;text-decoration-color:#111">500</span></div>
<div class="hl" style="left:0px;top:297px;width:1903px;height:1px;"></div>
<div class="c" style="left:1px;top:297px;width:42px;height:21px;line-height:21px;font-size:13px">0</div>
<div class="c" style="left:43px;top:297px;width:42px;height:21px;line-height:21px;font-size:13px">0</div>
<div class="c" style="left:85px;top:297px;width:42px;height:21px;line-height:21px;font-size:13px">500</div>
<div class="c" style="left:127px;top:297px;width:42px;height:21px;line-height:21px;font-size:13px">500</div>
<div class="c" style="left:169px;top:297px;width:42px;height:21px;line-height:21px;font-size:13px">500</div>
<div class="c" style="left:211px;top:297px;width:42px;height:21px;line-height:21px;font-size:13px">500</div>
<div class="c" style="left:253px;top:297px;width:42px;height:21px;line-height:21px;font-size:13px">500</div>
<div class="c" style="left:295px;top:297px;width:42px;height:21px;line-height:21px;font-size:13px">500</div>
<div class="c" style="left:337px;top:297px;width:42px;height:21px;line-height:21px;font-size:13px">500</div>
<div class="c" style="left:379px;top:297px;width:42px;height:21px;line-height:21px;font-size:13px">1000</div>
<div class="c" style="left:421px;top:297px;width:42px;height:21px;line-height:21px;font-size:13px">500</div>
<div class="c" style="left:464px;top:297px;width:156px;height:21px;line-height:21px;font-size:13px">Михаил Осокин</div>
<div class="t" style="left:622px;top:297px;width:1030px;height:21px;line-height:22px;font-size:13px;overflow:hidden;color:#111"><span class="u" style="margin-right:17px">Информацию нельзя передавать быстрее скорости С</span><span class="u" style="margin-right:17px">Информацию можно передавать быстрее скорости С</span><span class="u" style="margin-left:3px;margin-right:17px">...</span></div>
<div class="gd" style="left:1666px;top:304px"></div>
<div class="gy" style="left:1707px;top:304px"></div>
<div class="cb" style="left:1748px;top:300px;"></div>
<div class="cb" style="left:1790px;top:300px;"></div>
<div class="cb" style="left:1832px;top:300px;"></div>
<div class="c" style="left:1860px;top:297px;width:42px;height:20px;line-height:20px;font-size:13px"><span class="u" style="color:#555;text-decoration-color:#111">500</span></div>
<div class="hl" style="left:0px;top:317px;width:1903px;height:1px;"></div>
<div class="c" style="left:1px;top:317px;width:42px;height:21px;line-height:21px;font-size:13px">0</div>
<div class="c" style="left:43px;top:317px;width:42px;height:21px;line-height:21px;font-size:13px">0</div>
<div class="c" style="left:85px;top:317px;width:42px;height:21px;line-height:21px;font-size:13px">500</div>
<div class="c" style="left:127px;top:317px;width:42px;height:21px;line-height:21px;font-size:13px">500</div>
<div class="c" style="left:169px;top:317px;width:42px;height:21px;line-height:21px;font-size:13px">500</div>
<div class="c" style="left:211px;top:317px;width:42px;height:21px;line-height:21px;font-size:13px">500</div>
<div class="c" style="left:253px;top:317px;width:42px;height:21px;line-height:21px;font-size:13px">500</div>
<div class="c" style="left:295px;top:317px;width:42px;height:21px;line-height:21px;font-size:13px">500</div>
<div class="c" style="left:337px;top:317px;width:42px;height:21px;line-height:21px;font-size:13px">500</div>
<div class="c" style="left:379px;top:317px;width:42px;height:21px;line-height:21px;font-size:13px">1000</div>
<div class="c" style="left:421px;top:317px;width:42px;height:21px;line-height:21px;font-size:13px">500</div>
<div class="c" style="left:464px;top:317px;width:156px;height:21px;line-height:21px;font-size:13px">Леонид Матвеев</div>
<div class="t" style="left:622px;top:317px;width:1030px;height:21px;line-height:22px;font-size:13px;overflow:hidden;color:#111"><span class="u" style="margin-right:17px">Последний Самурай - красивая история эгоистичного негодяя</span><span class="u" style="margin-right:17px">чьи дети имеют право на 21% О2 и 0,04% СО2</span><span class="u" style="margin-left:3px;margin-right:17px">...</span></div>
<div class="gd" style="left:1666px;top:324px"></div>
<div class="gy" style="left:1707px;top:324px"></div>
<div class="cb" style="left:1748px;top:320px;"></div>
<div class="cb" style="left:1790px;top:320px;"></div>
<div class="cb" style="left:1832px;top:320px;"></div>
<div class="c" style="left:1860px;top:317px;width:42px;height:20px;line-height:20px;font-size:13px"><span class="u" style="color:#555;text-decoration-color:#111">500</span></div>
<div class="hl" style="left:0px;top:337px;width:1903px;height:1px;"></div>
<div class="c" style="left:1px;top:337px;width:42px;height:21px;line-height:21px;font-size:13px">0</div>
<div class="c" style="left:43px;top:337px;width:42px;height:21px;line-height:21px;font-size:13px">0</div>
<div class="c" style="left:85px;top:337px;width:42px;height:21px;line-height:21px;font-size:13px">500</div>
<div class="c" style="left:127px;top:337px;width:42px;height:21px;line-height:21px;font-size:13px">500</div>
<div class="c" style="left:169px;top:337px;width:42px;height:21px;line-height:21px;font-size:13px">500</div>
<div class="c" style="left:211px;top:337px;width:42px;height:21px;line-height:21px;font-size:13px">500</div>
<div class="c" style="left:253px;top:337px;width:42px;height:21px;line-height:21px;font-size:13px">500</div>
<div class="c" style="left:295px;top:337px;width:42px;height:21px;line-height:21px;font-size:13px">500</div>
<div class="c" style="left:337px;top:337px;width:42px;height:21px;line-height:21px;font-size:13px">500</div>
<div class="c" style="left:379px;top:337px;width:42px;height:21px;line-height:21px;font-size:13px">1000</div>
<div class="c" style="left:421px;top:337px;width:42px;height:21px;line-height:21px;font-size:13px">500</div>
<div class="c" style="left:464px;top:337px;width:156px;height:21px;line-height:21px;font-size:13px">Валерий Хотиненко</div>
<div class="t" style="left:622px;top:337px;width:1030px;height:21px;line-height:22px;font-size:13px;overflow:hidden;color:#111"><span class="u" style="margin-right:17px">Информацию можно передавать быстрее скорости С</span><span class="u" style="margin-right:17px">Результаты спортсменов растут. А почему?</span><span class="u" style="margin-left:3px;margin-right:17px">...</span></div>
<div class="gd" style="left:1666px;top:344px"></div>
<div class="gy" style="left:1707px;top:344px"></div>
<div class="cb" style="left:1748px;top:340px;"></div>
<div class="cb" style="left:1790px;top:340px;"></div>
<div class="cb" style="left:1832px;top:340px;"></div>
<div class="c" style="left:1860px;top:337px;width:42px;height:20px;line-height:20px;font-size:13px"><span class="u" style="color:#555;text-decoration-color:#111">500</span></div>
<div class="hl" style="left:0px;top:357px;width:1903px;height:1px;"></div>
<div class="c" style="left:1px;top:357px;width:42px;height:21px;line-height:21px;font-size:13px">0</div>
<div class="c" style="left:43px;top:357px;width:42px;height:21px;line-height:21px;font-size:13px">0</div>
<div class="c" style="left:85px;top:357px;width:42px;height:21px;line-height:21px;font-size:13px">500</div>
<div class="c" style="left:127px;top:357px;width:42px;height:21px;line-height:21px;font-size:13px">500</div>
<div class="c" style="left:169px;top:357px;width:42px;height:21px;line-height:21px;font-size:13px">500</div>
<div class="c" style="left:211px;top:357px;width:42px;height:21px;line-height:21px;font-size:13px">500</div>
<div class="c" style="left:253px;top:357px;width:42px;height:21px;line-height:21px;font-size:13px">500</div>
<div class="c" style="left:295px;top:357px;width:42px;height:21px;line-height:21px;font-size:13px">500</div>
<div class="c" style="left:337px;top:357px;width:42px;height:21px;line-height:21px;font-size:13px">500</div>
<div class="c" style="left:379px;top:357px;width:42px;height:21px;line-height:21px;font-size:13px">1000</div>
<div class="c" style="left:421px;top:357px;width:42px;height:21px;line-height:21px;font-size:13px">500</div>
<div class="c" style="left:464px;top:357px;width:156px;height:21px;line-height:21px;font-size:13px">Андрей Кодылев</div>
<div class="t" style="left:622px;top:357px;width:1030px;height:21px;line-height:22px;font-size:13px;overflow:hidden;color:#111"><span class="u" style="margin-right:17px">Помогать больным чревато, ухудшается генофонд, обрекая последующие поколения на страдания.</span><span class="u" style="margin-left:3px;margin-right:17px">...</span></div>
<div class="gd" style="left:1666px;top:364px"></div>
<div class="gy" style="left:1707px;top:364px"></div>
<div class="cb" style="left:1748px;top:360px;"></div>
<div class="cb" style="left:1790px;top:360px;"></div>
<div class="cb" style="left:1832px;top:360px;"></div>
<div class="c" style="left:1860px;top:357px;width:42px;height:20px;line-height:20px;font-size:13px"><span class="u" style="color:#555;text-decoration-color:#111">500</span></div>
<div class="hl" style="left:0px;top:377px;width:1903px;height:1px;"></div>
<div class="c" style="left:1px;top:377px;width:42px;height:21px;line-height:21px;font-size:13px">0</div>
<div class="c" style="left:43px;top:377px;width:42px;height:21px;line-height:21px;font-size:13px">0</div>
<div class="c" style="left:85px;top:377px;width:42px;height:21px;line-height:21px;font-size:13px">500</div>
<div class="c" style="left:127px;top:377px;width:42px;height:21px;line-height:21px;font-size:13px">500</div>
<div class="c" style="left:169px;top:377px;width:42px;height:21px;line-height:21px;font-size:13px">500</div>
<div class="c" style="left:211px;top:377px;width:42px;height:21px;line-height:21px;font-size:13px">500</div>
<div class="c" style="left:253px;top:377px;width:42px;height:21px;line-height:21px;font-size:13px">500</div>
<div class="c" style="left:295px;top:377px;width:42px;height:21px;line-height:21px;font-size:13px">500</div>
<div class="c" style="left:337px;top:377px;width:42px;height:21px;line-height:21px;font-size:13px">500</div>
<div class="c" style="left:379px;top:377px;width:42px;height:21px;line-height:21px;font-size:13px">1000</div>
<div class="c" style="left:421px;top:377px;width:42px;height:21px;line-height:21px;font-size:13px">500</div>
<div class="c" style="left:464px;top:377px;width:156px;height:21px;line-height:21px;font-size:13px">Николай Марченков</div>
<div class="t" style="left:622px;top:377px;width:1030px;height:21px;line-height:22px;font-size:13px;overflow:hidden;color:#111"><span class="u" style="margin-right:17px">Результаты спортсменов растут. А почему?</span><span class="u" style="margin-left:3px;margin-right:17px">...</span></div>
<div class="gd" style="left:1666px;top:384px"></div>
<div class="gy" style="left:1707px;top:384px"></div>
<div class="cb" style="left:1748px;top:380px;"></div>
<div class="cb" style="left:1790px;top:380px;"></div>
<div class="cb" style="left:1832px;top:380px;"></div>
<div class="c" style="left:1860px;top:377px;width:42px;height:20px;line-height:20px;font-size:13px"><span class="u" style="color:#555;text-decoration-color:#111">500</span></div>
<div class="hl" style="left:0px;top:397px;width:1903px;height:1px;"></div>
<div class="c" style="left:1px;top:397px;width:42px;height:21px;line-height:21px;font-size:13px">0</div>
<div class="c" style="left:43px;top:397px;width:42px;height:21px;line-height:21px;font-size:13px">0</div>
<div class="c" style="left:85px;top:397px;width:42px;height:21px;line-height:21px;font-size:13px">500</div>
<div class="c" style="left:127px;top:397px;width:42px;height:21px;line-height:21px;font-size:13px">500</div>
<div class="c" style="left:169px;top:397px;width:42px;height:21px;line-height:21px;font-size:13px">500</div>
<div class="c" style="left:211px;top:397px;width:42px;height:21px;line-height:21px;font-size:13px">500</div>
<div class="c" style="left:253px;top:397px;width:42px;height:21px;line-height:21px;font-size:13px">500</div>
<div class="c" style="left:295px;top:397px;width:42px;height:21px;line-height:21px;font-size:13px">500</div>
<div class="c" style="left:337px;top:397px;width:42px;height:21px;line-height:21px;font-size:13px">500</div>
<div class="c" style="left:379px;top:397px;width:42px;height:21px;line-height:21px;font-size:13px">1000</div>
<div class="c" style="left:421px;top:397px;width:42px;height:21px;line-height:21px;font-size:13px">500</div>
<div class="c" style="left:464px;top:397px;width:156px;height:21px;line-height:21px;font-size:13px">GYF GYF</div>
<div class="gd" style="left:1666px;top:404px"></div>
<div class="gy" style="left:1707px;top:404px"></div>
<div class="cb" style="left:1748px;top:400px;"></div>
<div class="cb" style="left:1790px;top:400px;"></div>
<div class="cb" style="left:1832px;top:400px;"></div>
<div class="c" style="left:1860px;top:397px;width:42px;height:20px;line-height:20px;font-size:13px"><span class="u" style="color:#555;text-decoration-color:#111">500</span></div>
<div class="hl" style="left:0px;top:417px;width:1903px;height:1px;"></div>
<div class="c" style="left:1px;top:417px;width:42px;height:21px;line-height:21px;font-size:13px">0</div>
<div class="c" style="left:43px;top:417px;width:42px;height:21px;line-height:21px;font-size:13px">0</div>
<div class="c" style="left:85px;top:417px;width:42px;height:21px;line-height:21px;font-size:13px">500</div>
<div class="c" style="left:127px;top:417px;width:42px;height:21px;line-height:21px;font-size:13px">500</div>
<div class="c" style="left:169px;top:417px;width:42px;height:21px;line-height:21px;font-size:13px">500</div>
<div class="c" style="left:211px;top:417px;width:42px;height:21px;line-height:21px;font-size:13px">500</div>
<div class="c" style="left:253px;top:417px;width:42px;height:21px;line-height:21px;font-size:13px">500</div>
<div class="c" style="left:295px;top:417px;width:42px;height:21px;line-height:21px;font-size:13px">500</div>
<div class="c" style="left:337px;top:417px;width:42px;height:21px;line-height:21px;font-size:13px">500</div>
<div class="c" style="left:379px;top:417px;width:42px;height:21px;line-height:21px;font-size:13px">1000</div>
<div class="c" style="left:421px;top:417px;width:42px;height:21px;line-height:21px;font-size:13px">500</div>
<div class="c" style="left:464px;top:417px;width:156px;height:21px;line-height:21px;font-size:13px">Дмитрий Ржевский</div>
<div class="gd" style="left:1666px;top:424px"></div>
<div class="gy" style="left:1707px;top:424px"></div>
<div class="cb" style="left:1748px;top:420px;"></div>
<div class="cb" style="left:1790px;top:420px;"></div>
<div class="cb" style="left:1832px;top:420px;"></div>
<div class="c" style="left:1860px;top:417px;width:42px;height:20px;line-height:20px;font-size:13px"><span class="u" style="color:#555;text-decoration-color:#111">500</span></div>
<div class="hl" style="left:0px;top:437px;width:1903px;height:1px;"></div>
<div class="vl" style="left:43px;top:216px;width:1px;height:221px;"></div>
<div class="vl" style="left:85px;top:216px;width:1px;height:221px;"></div>
<div class="vl" style="left:127px;top:216px;width:1px;height:221px;"></div>
<div class="vl" style="left:169px;top:216px;width:1px;height:221px;"></div>
<div class="vl" style="left:211px;top:216px;width:1px;height:221px;"></div>
<div class="vl" style="left:253px;top:216px;width:1px;height:221px;"></div>
<div class="vl" style="left:295px;top:216px;width:1px;height:221px;"></div>
<div class="vl" style="left:337px;top:216px;width:1px;height:221px;"></div>
<div class="vl" style="left:379px;top:216px;width:1px;height:221px;"></div>
<div class="vl" style="left:421px;top:216px;width:1px;height:221px;"></div>
<div class="vl" style="left:463px;top:216px;width:1px;height:221px;"></div>
<div class="vl" style="left:621px;top:216px;width:1px;height:221px;"></div>
<div class="vl" style="left:1650px;top:216px;width:1px;height:221px;"></div>
<div class="vl" style="left:1692px;top:216px;width:1px;height:221px;"></div>
<div class="vl" style="left:1734px;top:216px;width:1px;height:221px;"></div>
<div class="vl" style="left:1776px;top:216px;width:1px;height:221px;"></div>
<div class="vl" style="left:1818px;top:216px;width:1px;height:221px;"></div>
<div class="vl" style="left:1860px;top:216px;width:1px;height:221px;"></div>
<div style="left:0px;top:438px;width:118px;height:20px;background:#efefef;border-radius:0 0 4px 4px"></div>
<div class="t" style="left:17px;top:442px;font-size:13px;line-height:16px;color:#3469cc">Лидеры сайта</div>
<div class="t" style="left:134px;top:442px;font-size:13px;line-height:16px;color:#3469cc">Лидеры беседы</div>
<div class="t" style="left:262px;top:442px;font-size:13px;line-height:16px;color:#3469cc">Зона где вы</div>
<div class="t" style="left:371px;top:442px;font-size:11px;line-height:14px;color:#3469cc"><span class="u">&lt;&lt;</span></div>
<div class="t" style="left:395px;top:442px;font-size:11px;line-height:14px;color:#3469cc"><span class="u">&lt;</span></div>
<div class="t" style="left:409.5px;top:442px;font-size:11px;line-height:14px;color:#111"><span class="u">1</span></div>
<div class="t" style="left:421px;top:442px;font-size:11px;line-height:14px;color:#bbb">2</div>
<div class="t" style="left:432.5px;top:442px;font-size:11px;line-height:14px;color:#111"><span class="u">3</span></div>
<div class="t" style="left:446.5px;top:442px;font-size:11px;line-height:14px;color:#3469cc"><span class="u">&gt;</span></div>
<div class="t" style="left:464px;top:442px;font-size:11px;line-height:14px;color:#3469cc"><span class="u">&gt;&gt;</span></div>
<div style="left:2px;top:464px;width:1901px;height:23px;background:#efefef;border-radius:4px"></div>
<div class="t" style="left:619px;top:467px;font-size:13px;line-height:16px">сводная таблица : 2 лидера сайта, 2 лидера беседы, избранные, ваша статистика, оценки вас и кто вас видит</div>
<div class="c" style="left:1px;top:487px;width:42px;height:21px;line-height:21px;font-size:13px;line-height:22px">4</div>
<div class="c" style="left:43px;top:487px;width:42px;height:21px;line-height:21px;font-size:13px;line-height:22px">347</div>
<div class="c" style="left:85px;top:487px;width:42px;height:21px;line-height:21px;font-size:13px;line-height:22px">500</div>
<div class="c" style="left:127px;top:487px;width:42px;height:21px;line-height:21px;font-size:13px;line-height:22px">500</div>
<div class="c" style="left:169px;top:487px;width:42px;height:21px;line-height:21px;font-size:13px;line-height:22px">500</div>
<div class="c" style="left:211px;top:487px;width:42px;height:21px;line-height:21px;font-size:13px;line-height:22px">500</div>
<div class="c" style="left:253px;top:487px;width:42px;height:21px;line-height:21px;font-size:13px;line-height:22px">-10</div>
<div class="c" style="left:295px;top:487px;width:42px;height:21px;line-height:21px;font-size:13px;line-height:22px">500</div>
<div class="c" style="left:337px;top:487px;width:42px;height:21px;line-height:21px;font-size:13px;line-height:22px">500</div>
<div class="c" style="left:379px;top:487px;width:42px;height:21px;line-height:21px;font-size:13px;line-height:22px">33</div>
<div class="c" style="left:421px;top:487px;width:42px;height:21px;line-height:21px;font-size:13px;line-height:22px">669</div>
<div class="c" style="left:464px;top:487px;width:156px;height:21px;line-height:21px;font-size:13px;line-height:22px">max site Фамилия Имя…</div>
<div class="t" style="left:622px;top:487px;width:1030px;height:21px;line-height:23px;font-size:13px;overflow:hidden;color:#111"><span class="u" style="margin-right:17px">tesTFlag</span><span class="u" style="margin-right:17px">Врачи не лечат</span><span class="u" style="margin-right:17px">мусор</span><span class="u" style="margin-left:3px;margin-right:17px">...</span></div>
<div class="gd" style="left:1666px;top:495px"></div>
<div class="gy" style="left:1707px;top:495px"></div>
<div class="cb" style="left:1748px;top:490px;"></div>
<div class="cb" style="left:1790px;top:490px;"></div>
<div class="cb" style="left:1832px;top:490px;"></div>
<div class="c" style="left:1860px;top:487px;width:42px;height:21px;line-height:21px;font-size:13px;line-height:22px"><span class="u" style="color:#555;text-decoration-color:#111">669</span></div>
<div class="hl" style="left:0px;top:507px;width:1903px;height:1px;"></div>
<div class="c" style="left:1px;top:507px;width:42px;height:21px;line-height:21px;font-size:13px;line-height:22px">0</div>
<div class="c" style="left:43px;top:507px;width:42px;height:21px;line-height:21px;font-size:13px;line-height:22px">24</div>
<div class="c" style="left:85px;top:507px;width:42px;height:21px;line-height:21px;font-size:13px;line-height:22px">500</div>
<div class="c" style="left:127px;top:507px;width:42px;height:21px;line-height:21px;font-size:13px;line-height:22px">500</div>
<div class="c" style="left:169px;top:507px;width:42px;height:21px;line-height:21px;font-size:13px;line-height:22px">500</div>
<div class="c" style="left:211px;top:507px;width:42px;height:21px;line-height:21px;font-size:13px;line-height:22px">500</div>
<div class="c" style="left:253px;top:507px;width:42px;height:21px;line-height:21px;font-size:13px;line-height:22px">500</div>
<div class="c" style="left:295px;top:507px;width:42px;height:21px;line-height:21px;font-size:13px;line-height:22px">500</div>
<div class="c" style="left:337px;top:507px;width:42px;height:21px;line-height:21px;font-size:13px;line-height:22px">500</div>
<div class="c" style="left:379px;top:507px;width:42px;height:21px;line-height:21px;font-size:13px;line-height:22px">1000</div>
<div class="c" style="left:421px;top:507px;width:42px;height:21px;line-height:21px;font-size:13px;line-height:22px">502</div>
<div class="c" style="left:464px;top:507px;width:156px;height:21px;line-height:21px;font-size:13px;line-height:22px">max site Юрий Юрченко</div>
<div class="t" style="left:622px;top:507px;width:1030px;height:21px;line-height:23px;font-size:13px;overflow:hidden;color:#111"><span class="u" style="margin-right:17px">Последний Самурай - красивая история эгоистичного негодяя</span><span class="u" style="margin-right:17px">Погоня за модной или шикарной маркой не целесообразна</span><span class="u">В конфликте Палестины и Израиля в</span><span style="color:#444;margin-right:12px">…</span><span class="u">.</span><span style="color:#444">…</span></div>
<div class="gd" style="left:1666px;top:515px"></div>
<div class="gy" style="left:1707px;top:515px"></div>
<div class="cb" style="left:1748px;top:510px;"></div>
<div class="cb" style="left:1790px;top:510px;"></div>
<div class="cb" style="left:1832px;top:510px;"></div>
<div class="c" style="left:1860px;top:507px;width:42px;height:21px;line-height:21px;font-size:13px;line-height:22px"><span class="u" style="color:#555;text-decoration-color:#111">502</span></div>
<div class="hl" style="left:0px;top:527px;width:1903px;height:1px;"></div>
<div class="c" style="left:43px;top:527px;width:42px;height:21px;line-height:21px;font-size:13px;line-height:22px">0</div>
<div class="c" style="left:85px;top:527px;width:42px;height:21px;line-height:21px;font-size:13px;line-height:22px">0</div>
<div class="c" style="left:127px;top:527px;width:42px;height:21px;line-height:21px;font-size:13px;line-height:22px">0</div>
<div class="c" style="left:169px;top:527px;width:42px;height:21px;line-height:21px;font-size:13px;line-height:22px">0</div>
<div class="c" style="left:211px;top:527px;width:42px;height:21px;line-height:21px;font-size:13px;line-height:22px">0</div>
<div class="c" style="left:253px;top:527px;width:42px;height:21px;line-height:21px;font-size:13px;line-height:22px">0</div>
<div class="c" style="left:295px;top:527px;width:42px;height:21px;line-height:21px;font-size:13px;line-height:22px">0</div>
<div class="c" style="left:337px;top:527px;width:42px;height:21px;line-height:21px;font-size:13px;line-height:22px">0</div>
<div class="c" style="left:379px;top:527px;width:42px;height:21px;line-height:21px;font-size:13px;line-height:22px">0</div>
<div class="c" style="left:421px;top:527px;width:42px;height:21px;line-height:21px;font-size:13px;line-height:22px">0</div>
<div class="c" style="left:464px;top:527px;width:156px;height:21px;line-height:21px;font-size:13px;line-height:22px">min вашего оценщика</div>
<div class="t" style="left:622px;top:527px;height:21px;line-height:22px;font-size:13px;color:#111">участники с рейтингом ниже не смогут голосовать и оценивать вас. Настройка в столбце оценки</div>
<div class="c" style="left:1860px;top:527px;width:42px;height:21px;line-height:21px;font-size:13px;line-height:22px"><span class="u" style="color:#111">#</span></div>
<div class="hl" style="left:0px;top:547px;width:1903px;height:1px;"></div>
<div class="c" style="left:85px;top:547px;width:42px;height:21px;line-height:21px;font-size:13px;line-height:22px">0</div>
<div class="c" style="left:421px;top:547px;width:42px;height:21px;line-height:21px;font-size:13px;line-height:22px">0</div>
<div class="c" style="left:464px;top:547px;width:156px;height:21px;line-height:21px;font-size:13px;line-height:22px">Юрий Юрченко</div>
<div class="t" style="left:622px;top:547px;height:21px;line-height:22px;font-size:13px;color:#111">из 9 ваших оценок: min 09.10.25 12:53</div>
<div class="c" style="left:1860px;top:547px;width:42px;height:21px;line-height:21px;font-size:13px;line-height:22px"><span class="u" style="color:#111">0</span></div>
<div class="hl" style="left:0px;top:567px;width:1903px;height:1px;"></div>
<div class="c" style="left:85px;top:567px;width:42px;height:21px;line-height:21px;font-size:13px;line-height:22px">500</div>
<div class="c" style="left:127px;top:567px;width:42px;height:21px;line-height:21px;font-size:13px;line-height:22px">500</div>
<div class="c" style="left:169px;top:567px;width:42px;height:21px;line-height:21px;font-size:13px;line-height:22px">500</div>
<div class="c" style="left:211px;top:567px;width:42px;height:21px;line-height:21px;font-size:13px;line-height:22px">500</div>
<div class="c" style="left:253px;top:567px;width:42px;height:21px;line-height:21px;font-size:13px;line-height:22px">10</div>
<div class="c" style="left:295px;top:567px;width:42px;height:21px;line-height:21px;font-size:13px;line-height:22px">500</div>
<div class="c" style="left:337px;top:567px;width:42px;height:21px;line-height:21px;font-size:13px;line-height:22px">500</div>
<div class="c" style="left:421px;top:567px;width:42px;height:21px;line-height:21px;font-size:13px;line-height:22px">446</div>
<div class="c" style="left:464px;top:567px;width:156px;height:21px;line-height:21px;font-size:13px;line-height:22px">moderator Модератор</div>
<div class="t" style="left:622px;top:567px;height:21px;line-height:22px;font-size:13px;color:#111">max 08.04.25 13:26</div>
<div class="c" style="left:1860px;top:567px;width:42px;height:21px;line-height:21px;font-size:13px;line-height:22px"><span class="u" style="color:#111">446</span></div>
<div class="hl" style="left:0px;top:587px;width:1903px;height:1px;"></div>
<div class="c" style="left:85px;top:587px;width:42px;height:21px;line-height:21px;font-size:13px;line-height:22px">0</div>
<div class="c" style="left:127px;top:587px;width:42px;height:21px;line-height:21px;font-size:13px;line-height:22px">500</div>
<div class="c" style="left:169px;top:587px;width:42px;height:21px;line-height:21px;font-size:13px;line-height:22px">500</div>
<div class="c" style="left:211px;top:587px;width:42px;height:21px;line-height:21px;font-size:13px;line-height:22px">500</div>
<div class="c" style="left:253px;top:587px;width:42px;height:21px;line-height:21px;font-size:13px;line-height:22px">500</div>
<div class="c" style="left:295px;top:587px;width:42px;height:21px;line-height:21px;font-size:13px;line-height:22px">500</div>
<div class="c" style="left:337px;top:587px;width:42px;height:21px;line-height:21px;font-size:13px;line-height:22px">500</div>
<div class="c" style="left:421px;top:587px;width:42px;height:21px;line-height:21px;font-size:13px;line-height:22px">444</div>
<div class="c" style="left:464px;top:587px;width:156px;height:21px;line-height:21px;font-size:13px;line-height:22px">Фамилия Имявывы</div>
<div class="t" style="left:622px;top:587px;height:21px;line-height:22px;font-size:13px;color:#111">last 23.10.25 14:22</div>
<div class="c" style="left:1860px;top:587px;width:42px;height:21px;line-height:21px;font-size:13px;line-height:22px"><span class="u" style="color:#111">444</span></div>
<div class="hl" style="left:0px;top:607px;width:1903px;height:1px;"></div>
<div class="c" style="left:1px;top:607px;width:42px;height:21px;line-height:21px;font-size:13px;line-height:22px">0</div>
<div class="c" style="left:43px;top:607px;width:42px;height:21px;line-height:21px;font-size:13px;line-height:22px">0</div>
<div class="c" style="left:85px;top:607px;width:42px;height:21px;line-height:21px;font-size:13px;line-height:22px">500</div>
<div class="c" style="left:127px;top:607px;width:42px;height:21px;line-height:21px;font-size:13px;line-height:22px">500</div>
<div class="c" style="left:169px;top:607px;width:42px;height:21px;line-height:21px;font-size:13px;line-height:22px">500</div>
<div class="c" style="left:211px;top:607px;width:42px;height:21px;line-height:21px;font-size:13px;line-height:22px">500</div>
<div class="c" style="left:253px;top:607px;width:42px;height:21px;line-height:21px;font-size:13px;line-height:22px">500</div>
<div class="c" style="left:295px;top:607px;width:42px;height:21px;line-height:21px;font-size:13px;line-height:22px">500</div>
<div class="c" style="left:337px;top:607px;width:42px;height:21px;line-height:21px;font-size:13px;line-height:22px">500</div>
<div class="c" style="left:379px;top:607px;width:42px;height:21px;line-height:21px;font-size:13px;line-height:22px">1000</div>
<div class="c" style="left:421px;top:607px;width:42px;height:21px;line-height:21px;font-size:13px;line-height:22px">500</div>
<div class="c" style="left:464px;top:607px;width:156px;height:21px;line-height:21px;font-size:13px;line-height:22px">Настя Михайлова</div>
<div class="t" style="left:622px;top:607px;height:21px;line-height:22px;font-size:13px;color:#111">Вы - автор <span class="u">5 </span>дискуссий. К вам <span class="u">3 </span>вопросов, по <span class="u">3 </span>из них работает таймер , есть просроченный вопрос</div>
<div class="gd" style="left:1666px;top:614px"></div>
<div class="gy" style="left:1707px;top:614px"></div>
<div class="cb" style="left:1748px;top:610px;"></div>
<div class="cb" style="left:1790px;top:610px;background:#e6e8ee;border-color:#dfe2ea"></div>
<div class="cb" style="left:1832px;top:610px;"></div>
<div class="c" style="left:1860px;top:607px;width:42px;height:21px;line-height:21px;font-size:13px;line-height:22px"><span class="u" style="color:#555;text-decoration-color:#111">500</span></div>
<div class="vl" style="left:43px;top:487px;width:1px;height:140px;"></div>
<div class="vl" style="left:85px;top:487px;width:1px;height:140px;"></div>
<div class="vl" style="left:127px;top:487px;width:1px;height:140px;"></div>
<div class="vl" style="left:169px;top:487px;width:1px;height:140px;"></div>
<div class="vl" style="left:211px;top:487px;width:1px;height:140px;"></div>
<div class="vl" style="left:253px;top:487px;width:1px;height:140px;"></div>
<div class="vl" style="left:295px;top:487px;width:1px;height:140px;"></div>
<div class="vl" style="left:337px;top:487px;width:1px;height:140px;"></div>
<div class="vl" style="left:379px;top:487px;width:1px;height:140px;"></div>
<div class="vl" style="left:421px;top:487px;width:1px;height:140px;"></div>
<div class="vl" style="left:463px;top:487px;width:1px;height:140px;"></div>
<div class="vl" style="left:621px;top:487px;width:1px;height:140px;"></div>
<div class="vl" style="left:1650px;top:487px;width:1px;height:140px;"></div>
<div class="vl" style="left:1692px;top:487px;width:1px;height:140px;"></div>
<div class="vl" style="left:1734px;top:487px;width:1px;height:140px;"></div>
<div class="vl" style="left:1776px;top:487px;width:1px;height:140px;"></div>
<div class="vl" style="left:1818px;top:487px;width:1px;height:140px;"></div>
<div class="vl" style="left:1860px;top:487px;width:1px;height:140px;"></div>
<div class="c" style="left:1px;top:628px;width:42px;height:19px;line-height:19px;font-size:13px">100%</div>
<div class="c" style="left:43px;top:628px;width:42px;height:19px;line-height:19px;font-size:13px">94%</div>
<div class="c" style="left:85px;top:628px;width:42px;height:19px;line-height:19px;font-size:13px">100%</div>
<div class="c" style="left:127px;top:628px;width:42px;height:19px;line-height:19px;font-size:13px">100%</div>
<div class="c" style="left:169px;top:628px;width:42px;height:19px;line-height:19px;font-size:13px">100%</div>
<div class="c" style="left:211px;top:628px;width:42px;height:19px;line-height:19px;font-size:13px">100%</div>
<div class="c" style="left:253px;top:628px;width:42px;height:19px;line-height:19px;font-size:13px">100%</div>
<div class="c" style="left:295px;top:628px;width:42px;height:19px;line-height:19px;font-size:13px">100%</div>
<div class="c" style="left:337px;top:628px;width:42px;height:19px;line-height:19px;font-size:13px">100%</div>
<div class="c" style="left:379px;top:628px;width:42px;height:19px;line-height:19px;font-size:13px">100%</div>
<div class="c" style="left:421px;top:628px;width:42px;height:19px;line-height:19px;font-size:13px">100%</div>
<div class="t" style="left:775px;top:630px;font-size:14px;line-height:16px">% пользователей, фильтр которых вы прошли по каждому из параметров и итоговый % видимости Вас другими участниками</div>
<div class="hg" style="left:2px;top:651px;width:418px;height:23px;"></div>
<div class="c" style="left:2px;top:652px;width:418px;height:23px;line-height:23px;font-size:13px;color:#111">Каталог тем</div>
<div style="left:20px;top:676px;width:1px;height:240px;background:#c4c4c4"></div>
<svg style="position:absolute;left:15px;top:680px" width="11" height="11" viewBox="0 0 11 11"><rect x="1.5" y="1.5" width="8.5" height="8.5" rx="1.5" fill="#fff" stroke="#9a9a9a"/><path d="M3.5 5.75 H8 M5.75 3.5 V8" stroke="#000" stroke-width="1.4"/></svg>
<div style="left:26px;top:685px;width:4px;height:1px;background:#c4c4c4"></div>
<svg style="position:absolute;left:29px;top:679px" width="16" height="14" viewBox="0 0 16 14"><defs><linearGradient id="fg0" x1="0" y1="0" x2="0" y2="1"><stop offset="0" stop-color="#fff7c0"/><stop offset="1" stop-color="#f5cc50"/></linearGradient></defs><path d="M1.5 2.5 Q1.5 1 3 1 L6 1 Q7 1 7.5 2.2 L14 2.2 Q15 2.2 15 3.2 L15 12 Q15 13 14 13 L2.5 13 Q1.5 13 1.5 12 Z" fill="url(#fg0)" stroke="#c68a14" stroke-width="1.1"/><path d="M2 4.5 H14.5" stroke="#d9a93a" stroke-width="0.8"/></svg>
<div class="t" style="left:48px;top:678px;font-size:14px;line-height:16px">Гуманитарное общество (19)</div>
<svg style="position:absolute;left:15px;top:696px" width="11" height="11" viewBox="0 0 11 11"><rect x="1.5" y="1.5" width="8.5" height="8.5" rx="1.5" fill="#fff" stroke="#9a9a9a"/><path d="M3.5 5.75 H8 M5.75 3.5 V8" stroke="#000" stroke-width="1.4"/></svg>
<div style="left:26px;top:701px;width:4px;height:1px;background:#c4c4c4"></div>
<svg style="position:absolute;left:29px;top:695px" width="16" height="14" viewBox="0 0 16 14"><defs><linearGradient id="fg1" x1="0" y1="0" x2="0" y2="1"><stop offset="0" stop-color="#fff7c0"/><stop offset="1" stop-color="#f5cc50"/></linearGradient></defs><path d="M1.5 2.5 Q1.5 1 3 1 L6 1 Q7 1 7.5 2.2 L14 2.2 Q15 2.2 15 3.2 L15 12 Q15 13 14 13 L2.5 13 Q1.5 13 1.5 12 Z" fill="url(#fg1)" stroke="#c68a14" stroke-width="1.1"/><path d="M2 4.5 H14.5" stroke="#d9a93a" stroke-width="0.8"/></svg>
<div class="t" style="left:48px;top:694px;font-size:14px;line-height:16px">Функции государства (19)</div>
<svg style="position:absolute;left:15px;top:712px" width="11" height="11" viewBox="0 0 11 11"><rect x="1.5" y="1.5" width="8.5" height="8.5" rx="1.5" fill="#fff" stroke="#9a9a9a"/><path d="M3.5 5.75 H8 M5.75 3.5 V8" stroke="#000" stroke-width="1.4"/></svg>
<div style="left:26px;top:717px;width:4px;height:1px;background:#c4c4c4"></div>
<svg style="position:absolute;left:29px;top:711px" width="16" height="14" viewBox="0 0 16 14"><defs><linearGradient id="fg2" x1="0" y1="0" x2="0" y2="1"><stop offset="0" stop-color="#fff7c0"/><stop offset="1" stop-color="#f5cc50"/></linearGradient></defs><path d="M1.5 2.5 Q1.5 1 3 1 L6 1 Q7 1 7.5 2.2 L14 2.2 Q15 2.2 15 3.2 L15 12 Q15 13 14 13 L2.5 13 Q1.5 13 1.5 12 Z" fill="url(#fg2)" stroke="#c68a14" stroke-width="1.1"/><path d="M2 4.5 H14.5" stroke="#d9a93a" stroke-width="0.8"/></svg>
<div class="t" style="left:48px;top:710px;font-size:14px;line-height:16px">Законы и судебная система (10)</div>
<svg style="position:absolute;left:15px;top:728px" width="11" height="11" viewBox="0 0 11 11"><rect x="1.5" y="1.5" width="8.5" height="8.5" rx="1.5" fill="#fff" stroke="#9a9a9a"/><path d="M3.5 5.75 H8 M5.75 3.5 V8" stroke="#000" stroke-width="1.4"/></svg>
<div style="left:26px;top:733px;width:4px;height:1px;background:#c4c4c4"></div>
<svg style="position:absolute;left:29px;top:727px" width="16" height="14" viewBox="0 0 16 14"><defs><linearGradient id="fg3" x1="0" y1="0" x2="0" y2="1"><stop offset="0" stop-color="#fff7c0"/><stop offset="1" stop-color="#f5cc50"/></linearGradient></defs><path d="M1.5 2.5 Q1.5 1 3 1 L6 1 Q7 1 7.5 2.2 L14 2.2 Q15 2.2 15 3.2 L15 12 Q15 13 14 13 L2.5 13 Q1.5 13 1.5 12 Z" fill="url(#fg3)" stroke="#c68a14" stroke-width="1.1"/><path d="M2 4.5 H14.5" stroke="#d9a93a" stroke-width="0.8"/></svg>
<div class="t" style="left:48px;top:726px;font-size:14px;line-height:16px">Медицина обмен опытом (0)</div>
<svg style="position:absolute;left:15px;top:744px" width="11" height="11" viewBox="0 0 11 11"><rect x="1.5" y="1.5" width="8.5" height="8.5" rx="1.5" fill="#fff" stroke="#9a9a9a"/><path d="M3.5 5.75 H8 M5.75 3.5 V8" stroke="#000" stroke-width="1.4"/></svg>
<div style="left:26px;top:749px;width:4px;height:1px;background:#c4c4c4"></div>
<svg style="position:absolute;left:29px;top:743px" width="16" height="14" viewBox="0 0 16 14"><defs><linearGradient id="fg4" x1="0" y1="0" x2="0" y2="1"><stop offset="0" stop-color="#fff7c0"/><stop offset="1" stop-color="#f5cc50"/></linearGradient></defs><path d="M1.5 2.5 Q1.5 1 3 1 L6 1 Q7 1 7.5 2.2 L14 2.2 Q15 2.2 15 3.2 L15 12 Q15 13 14 13 L2.5 13 Q1.5 13 1.5 12 Z" fill="url(#fg4)" stroke="#c68a14" stroke-width="1.1"/><path d="M2 4.5 H14.5" stroke="#d9a93a" stroke-width="0.8"/></svg>
<div class="t" style="left:48px;top:742px;font-size:14px;line-height:16px">Образование обмен опытом (0)</div>
<svg style="position:absolute;left:15px;top:760px" width="11" height="11" viewBox="0 0 11 11"><rect x="1.5" y="1.5" width="8.5" height="8.5" rx="1.5" fill="#fff" stroke="#9a9a9a"/><path d="M3.5 5.75 H8 M5.75 3.5 V8" stroke="#000" stroke-width="1.4"/></svg>
<div style="left:26px;top:765px;width:4px;height:1px;background:#c4c4c4"></div>
<svg style="position:absolute;left:29px;top:759px" width="16" height="14" viewBox="0 0 16 14"><defs><linearGradient id="fg5" x1="0" y1="0" x2="0" y2="1"><stop offset="0" stop-color="#fff7c0"/><stop offset="1" stop-color="#f5cc50"/></linearGradient></defs><path d="M1.5 2.5 Q1.5 1 3 1 L6 1 Q7 1 7.5 2.2 L14 2.2 Q15 2.2 15 3.2 L15 12 Q15 13 14 13 L2.5 13 Q1.5 13 1.5 12 Z" fill="url(#fg5)" stroke="#c68a14" stroke-width="1.1"/><path d="M2 4.5 H14.5" stroke="#d9a93a" stroke-width="0.8"/></svg>
<div class="t" style="left:48px;top:758px;font-size:14px;line-height:16px">Здоровье и познай себя (8)</div>
<svg style="position:absolute;left:15px;top:776px" width="11" height="11" viewBox="0 0 11 11"><rect x="1.5" y="1.5" width="8.5" height="8.5" rx="1.5" fill="#fff" stroke="#9a9a9a"/><path d="M3.5 5.75 H8 M5.75 3.5 V8" stroke="#000" stroke-width="1.4"/></svg>
<div style="left:26px;top:781px;width:4px;height:1px;background:#c4c4c4"></div>
<svg style="position:absolute;left:29px;top:775px" width="16" height="14" viewBox="0 0 16 14"><defs><linearGradient id="fg6" x1="0" y1="0" x2="0" y2="1"><stop offset="0" stop-color="#fff7c0"/><stop offset="1" stop-color="#f5cc50"/></linearGradient></defs><path d="M1.5 2.5 Q1.5 1 3 1 L6 1 Q7 1 7.5 2.2 L14 2.2 Q15 2.2 15 3.2 L15 12 Q15 13 14 13 L2.5 13 Q1.5 13 1.5 12 Z" fill="url(#fg6)" stroke="#c68a14" stroke-width="1.1"/><path d="M2 4.5 H14.5" stroke="#d9a93a" stroke-width="0.8"/></svg>
<div class="t" style="left:48px;top:774px;font-size:14px;line-height:16px">Отношения в семье (8)</div>
<svg style="position:absolute;left:15px;top:792px" width="11" height="11" viewBox="0 0 11 11"><rect x="1.5" y="1.5" width="8.5" height="8.5" rx="1.5" fill="#fff" stroke="#9a9a9a"/><path d="M3.5 5.75 H8 M5.75 3.5 V8" stroke="#000" stroke-width="1.4"/></svg>
<div style="left:26px;top:797px;width:4px;height:1px;background:#c4c4c4"></div>
<svg style="position:absolute;left:29px;top:791px" width="16" height="14" viewBox="0 0 16 14"><defs><linearGradient id="fg7" x1="0" y1="0" x2="0" y2="1"><stop offset="0" stop-color="#fff7c0"/><stop offset="1" stop-color="#f5cc50"/></linearGradient></defs><path d="M1.5 2.5 Q1.5 1 3 1 L6 1 Q7 1 7.5 2.2 L14 2.2 Q15 2.2 15 3.2 L15 12 Q15 13 14 13 L2.5 13 Q1.5 13 1.5 12 Z" fill="url(#fg7)" stroke="#c68a14" stroke-width="1.1"/><path d="M2 4.5 H14.5" stroke="#d9a93a" stroke-width="0.8"/></svg>
<div class="t" style="left:48px;top:790px;font-size:14px;line-height:16px">Философия (17)</div>
<svg style="position:absolute;left:15px;top:808px" width="11" height="11" viewBox="0 0 11 11"><rect x="1.5" y="1.5" width="8.5" height="8.5" rx="1.5" fill="#fff" stroke="#9a9a9a"/><path d="M3.5 5.75 H8 M5.75 3.5 V8" stroke="#000" stroke-width="1.4"/></svg>
<div style="left:26px;top:813px;width:4px;height:1px;background:#c4c4c4"></div>
<svg style="position:absolute;left:29px;top:807px" width="16" height="14" viewBox="0 0 16 14"><defs><linearGradient id="fg8" x1="0" y1="0" x2="0" y2="1"><stop offset="0" stop-color="#fff7c0"/><stop offset="1" stop-color="#f5cc50"/></linearGradient></defs><path d="M1.5 2.5 Q1.5 1 3 1 L6 1 Q7 1 7.5 2.2 L14 2.2 Q15 2.2 15 3.2 L15 12 Q15 13 14 13 L2.5 13 Q1.5 13 1.5 12 Z" fill="url(#fg8)" stroke="#c68a14" stroke-width="1.1"/><path d="M2 4.5 H14.5" stroke="#d9a93a" stroke-width="0.8"/></svg>
<div class="t" style="left:48px;top:806px;font-size:14px;line-height:16px">Искусство и мода (6)</div>
<svg style="position:absolute;left:15px;top:824px" width="11" height="11" viewBox="0 0 11 11"><rect x="1.5" y="1.5" width="8.5" height="8.5" rx="1.5" fill="#fff" stroke="#9a9a9a"/><path d="M3.5 5.75 H8 M5.75 3.5 V8" stroke="#000" stroke-width="1.4"/></svg>
<div style="left:26px;top:829px;width:4px;height:1px;background:#c4c4c4"></div>
<svg style="position:absolute;left:29px;top:823px" width="16" height="14" viewBox="0 0 16 14"><defs><linearGradient id="fg9" x1="0" y1="0" x2="0" y2="1"><stop offset="0" stop-color="#fff7c0"/><stop offset="1" stop-color="#f5cc50"/></linearGradient></defs><path d="M1.5 2.5 Q1.5 1 3 1 L6 1 Q7 1 7.5 2.2 L14 2.2 Q15 2.2 15 3.2 L15 12 Q15 13 14 13 L2.5 13 Q1.5 13 1.5 12 Z" fill="url(#fg9)" stroke="#c68a14" stroke-width="1.1"/><path d="M2 4.5 H14.5" stroke="#d9a93a" stroke-width="0.8"/></svg>
<div class="t" style="left:48px;top:822px;font-size:14px;line-height:16px">Интересные вопросы истории (7)</div>
<svg style="position:absolute;left:15px;top:840px" width="11" height="11" viewBox="0 0 11 11"><rect x="1.5" y="1.5" width="8.5" height="8.5" rx="1.5" fill="#fff" stroke="#9a9a9a"/><path d="M3.5 5.75 H8 M5.75 3.5 V8" stroke="#000" stroke-width="1.4"/></svg>
<div style="left:26px;top:845px;width:4px;height:1px;background:#c4c4c4"></div>
<svg style="position:absolute;left:29px;top:839px" width="16" height="14" viewBox="0 0 16 14"><defs><linearGradient id="fg10" x1="0" y1="0" x2="0" y2="1"><stop offset="0" stop-color="#fff7c0"/><stop offset="1" stop-color="#f5cc50"/></linearGradient></defs><path d="M1.5 2.5 Q1.5 1 3 1 L6 1 Q7 1 7.5 2.2 L14 2.2 Q15 2.2 15 3.2 L15 12 Q15 13 14 13 L2.5 13 Q1.5 13 1.5 12 Z" fill="url(#fg10)" stroke="#c68a14" stroke-width="1.1"/><path d="M2 4.5 H14.5" stroke="#d9a93a" stroke-width="0.8"/></svg>
<div class="t" style="left:48px;top:838px;font-size:14px;line-height:16px">Познавательные не научные вопросы (7)</div>
<svg style="position:absolute;left:15px;top:856px" width="11" height="11" viewBox="0 0 11 11"><rect x="1.5" y="1.5" width="8.5" height="8.5" rx="1.5" fill="#fff" stroke="#9a9a9a"/><path d="M3.5 5.75 H8 M5.75 3.5 V8" stroke="#000" stroke-width="1.4"/></svg>
<div style="left:26px;top:861px;width:4px;height:1px;background:#c4c4c4"></div>
<svg style="position:absolute;left:29px;top:855px" width="16" height="14" viewBox="0 0 16 14"><defs><linearGradient id="fg11" x1="0" y1="0" x2="0" y2="1"><stop offset="0" stop-color="#fff7c0"/><stop offset="1" stop-color="#f5cc50"/></linearGradient></defs><path d="M1.5 2.5 Q1.5 1 3 1 L6 1 Q7 1 7.5 2.2 L14 2.2 Q15 2.2 15 3.2 L15 12 Q15 13 14 13 L2.5 13 Q1.5 13 1.5 12 Z" fill="url(#fg11)" stroke="#c68a14" stroke-width="1.1"/><path d="M2 4.5 H14.5" stroke="#d9a93a" stroke-width="0.8"/></svg>
<div class="t" style="left:48px;top:854px;font-size:14px;line-height:16px">Обсуждение источников по внешним ссылкам (8)</div>
<svg style="position:absolute;left:15px;top:872px" width="11" height="11" viewBox="0 0 11 11"><rect x="1.5" y="1.5" width="8.5" height="8.5" rx="1.5" fill="#fff" stroke="#9a9a9a"/><path d="M3.5 5.75 H8 M5.75 3.5 V8" stroke="#000" stroke-width="1.4"/></svg>
<div style="left:26px;top:877px;width:4px;height:1px;background:#c4c4c4"></div>
<svg style="position:absolute;left:29px;top:871px" width="16" height="14" viewBox="0 0 16 14"><defs><linearGradient id="fg12" x1="0" y1="0" x2="0" y2="1"><stop offset="0" stop-color="#fff7c0"/><stop offset="1" stop-color="#f5cc50"/></linearGradient></defs><path d="M1.5 2.5 Q1.5 1 3 1 L6 1 Q7 1 7.5 2.2 L14 2.2 Q15 2.2 15 3.2 L15 12 Q15 13 14 13 L2.5 13 Q1.5 13 1.5 12 Z" fill="url(#fg12)" stroke="#c68a14" stroke-width="1.1"/><path d="M2 4.5 H14.5" stroke="#d9a93a" stroke-width="0.8"/></svg>
<div class="t" style="left:48px;top:870px;font-size:14px;line-height:16px">Споры по оценкам (0)</div>
<svg style="position:absolute;left:15px;top:888px" width="11" height="11" viewBox="0 0 11 11"><rect x="1.5" y="1.5" width="8.5" height="8.5" rx="1.5" fill="#fff" stroke="#9a9a9a"/><path d="M3.5 5.75 H8 M5.75 3.5 V8" stroke="#000" stroke-width="1.4"/></svg>
<div style="left:26px;top:893px;width:4px;height:1px;background:#c4c4c4"></div>
<svg style="position:absolute;left:29px;top:887px" width="16" height="14" viewBox="0 0 16 14"><defs><linearGradient id="fg13" x1="0" y1="0" x2="0" y2="1"><stop offset="0" stop-color="#fff7c0"/><stop offset="1" stop-color="#f5cc50"/></linearGradient></defs><path d="M1.5 2.5 Q1.5 1 3 1 L6 1 Q7 1 7.5 2.2 L14 2.2 Q15 2.2 15 3.2 L15 12 Q15 13 14 13 L2.5 13 Q1.5 13 1.5 12 Z" fill="url(#fg13)" stroke="#c68a14" stroke-width="1.1"/><path d="M2 4.5 H14.5" stroke="#d9a93a" stroke-width="0.8"/></svg>
<div class="t" style="left:48px;top:886px;font-size:14px;line-height:16px">Предложения по улучшению сайта (3)</div>
<svg style="position:absolute;left:15px;top:904px" width="11" height="11" viewBox="0 0 11 11"><rect x="1.5" y="1.5" width="8.5" height="8.5" rx="1.5" fill="#fff" stroke="#9a9a9a"/><path d="M3.5 5.75 H8 M5.75 3.5 V8" stroke="#000" stroke-width="1.4"/></svg>
<div style="left:26px;top:909px;width:4px;height:1px;background:#c4c4c4"></div>
<svg style="position:absolute;left:29px;top:903px" width="16" height="14" viewBox="0 0 16 14"><defs><linearGradient id="fg14" x1="0" y1="0" x2="0" y2="1"><stop offset="0" stop-color="#fff7c0"/><stop offset="1" stop-color="#f5cc50"/></linearGradient></defs><path d="M1.5 2.5 Q1.5 1 3 1 L6 1 Q7 1 7.5 2.2 L14 2.2 Q15 2.2 15 3.2 L15 12 Q15 13 14 13 L2.5 13 Q1.5 13 1.5 12 Z" fill="url(#fg14)" stroke="#c68a14" stroke-width="1.1"/><path d="M2 4.5 H14.5" stroke="#d9a93a" stroke-width="0.8"/></svg>
<div class="t" style="left:48px;top:902px;font-size:14px;line-height:16px">Не самостоятельные темы (9)</div>
<div class="hg" style="left:424px;top:651px;width:75px;height:23px;"></div>
<div class="t" style="left:448px;top:656px;font-size:13px;line-height:16px">₽</div>
<div class="cb" style="left:464px;top:656px;width:15px;height:15px;border-color:#777;border-radius:3px"></div>
<div class="fl" style="left:424px;top:676px;width:74px;height:30px;"></div>
<div class="c" style="left:424px;top:677px;width:74px;height:30px;line-height:30px;font-size:13px">0</div>
<div class="hg" style="left:501px;top:651px;width:636px;height:23px;"></div>
<div class="c" style="left:501px;top:652px;width:636px;height:23px;line-height:23px;font-size:14.4px;color:#111">Таблица дискуссий</div>
<svg style="position:absolute;left:1112px;top:655px" width="16" height="16" viewBox="0 0 16 16"><circle cx="8" cy="8" r="7.5" fill="#3fae3f"/><circle cx="8" cy="7" r="6" fill="#5cc95c"/><path d="M8 4 V12 M4 8 H12" stroke="#fff" stroke-width="2.2"/></svg>
<div class="fl" style="left:501px;top:676px;width:636px;height:30px;"></div>
<svg style="position:absolute;left:504px;top:683px" width="17" height="17" viewBox="0 0 17 17"><circle cx="7" cy="7" r="5.3" fill="none" stroke="#111" stroke-width="1.7"/><path d="M11 11 L15.5 15.5" stroke="#111" stroke-width="2"/></svg>
<div style="left:523.5px;top:676px;width:1.5px;height:30px;background:#fff;opacity:.8"></div>
<div class="t" style="left:528px;top:684px;font-size:13px;line-height:16px;color:#888">Поиск...</div>
<div class="hg" style="left:1139px;top:651px;width:216px;height:23px;"></div>
<div class="t" style="left:1201px;top:655px;font-size:14.4px;line-height:17px;color:#111">автор/user</div>
<div class="cb" style="left:1278px;top:656px;width:15px;height:15px;border-color:#777;border-radius:3px"></div>
<div class="fl" style="left:1139px;top:676px;width:216px;height:30px;"></div>
<svg style="position:absolute;left:1143px;top:683px" width="17" height="17" viewBox="0 0 17 17"><circle cx="7" cy="7" r="5.3" fill="none" stroke="#111" stroke-width="1.7"/><path d="M11 11 L15.5 15.5" stroke="#111" stroke-width="2"/></svg>
<div style="left:1163.5px;top:676px;width:1.5px;height:30px;background:#fff;opacity:.8"></div>
<div class="t" style="left:1167px;top:684px;font-size:13px;line-height:16px;color:#888">Поиск...</div>
<div class="hg" style="left:1357px;top:651px;width:86px;height:23px;"></div>
<div class="hg" style="left:1444px;top:651px;width:57px;height:23px;"></div>
<div class="hg" style="left:1503px;top:651px;width:57px;height:23px;"></div>
<div class="hg" style="left:1563px;top:651px;width:61px;height:23px;"></div>
<div class="hg" style="left:1626px;top:651px;width:63px;height:23px;"></div>
<div class="hg" style="left:1691px;top:651px;width:46px;height:23px;"></div>
<div class="hg" style="left:1739px;top:651px;width:46px;height:23px;"></div>
<div class="hg" style="left:1787px;top:651px;width:61px;height:23px;"></div>
<div class="hg" style="left:1850px;top:651px;width:47px;height:23px;"></div>
<div class="c" style="left:1357px;top:652px;width:86px;height:23px;line-height:23px;font-size:14.4px;color:#111">views</div>
<div class="c" style="left:1563px;top:652px;width:61px;height:23px;line-height:23px;font-size:14.4px;color:#111">Lead</div>
<div class="c" style="left:1787px;top:652px;width:61px;height:23px;line-height:23px;font-size:14.4px;color:#111">Last</div>
<svg style="position:absolute;left:1463px;top:654px" width="19" height="18" viewBox="0 0 19 18"><path d="M1 8 H5 V17 H1 Z M5 8.5 L9 2 Q10 0.5 11 1.5 Q12 2.5 11.2 5 L10.5 7 H16.5 Q18 7 17.8 8.6 L16.5 15.5 Q16.2 17 14.8 17 H5" fill="none" stroke="#444" stroke-width="1.1" stroke-linejoin="round"/></svg>
<svg style="position:absolute;left:1522px;top:655px" width="19" height="18" viewBox="0 0 19 18"><path d="M1 10 H5 V1 H1 Z M5 9.5 L9 16 Q10 17.5 11 16.5 Q12 15.5 11.2 13 L10.5 11 H16.5 Q18 11 17.8 9.4 L16.5 2.5 Q16.2 1 14.8 1 H5" fill="none" stroke="#444" stroke-width="1.1" stroke-linejoin="round"/></svg>
<svg style="position:absolute;left:1648px;top:654px" width="19" height="18" viewBox="0 0 19 18"><path d="M1 1.5 H14 L9 8 V16 L6 14 V8 Z" fill="none" stroke="#333" stroke-width="1.3" stroke-linejoin="round"/><path d="M11 10 H18 M11 13 H18 M11 16 H18" stroke="#333" stroke-width="1.2"/></svg>
<svg style="position:absolute;left:1704px;top:655px" width="19" height="19" viewBox="0 0 18 18"><path d="M9 1 L11.2 6.6 L17 6.9 L12.5 10.6 L14 16.6 L9 13.3 L4 16.6 L5.5 10.6 L1 6.9 L6.8 6.6 Z" fill="none" stroke="#222" stroke-width="1.3" stroke-linejoin="miter"/></svg>
<svg style="position:absolute;left:1753px;top:655px" width="18" height="20" viewBox="0 0 18 20"><path d="M2.5 3 Q3 0.5 6 0.5 Q9 0.8 9.5 3.5 L9.5 6.5 Q11 8 13.5 7.5 Q15.5 6.5 16 4.5 L17.5 4.2 Q17 7 15 9 L15 12 Q15.5 15 15 19 L13 19 L12.5 14 Q10 14.5 8 14 L7.5 19 L5.5 19 L5.2 13 Q4 10 4.5 7.5 Q2.5 8 1.5 7 Q0.5 5 2.5 3Z" fill="#c8c8c8"/></svg>
<svg style="position:absolute;left:1864px;top:655px" width="20" height="17" viewBox="0 0 20 17"><path d="M2 6 H6 L15 1.5 V14 L6 10 H2 Z M4 10 L5.5 16 H8 L7 10" fill="none" stroke="#bbb" stroke-width="1.2" stroke-linejoin="round"/><circle cx="16.5" cy="7.7" r="2" fill="none" stroke="#bbb" stroke-width="1.1"/></svg>
<div class="fl" style="left:1357px;top:676px;width:86px;height:30px;"></div>
<div class="c" style="left:1357px;top:677px;width:86px;height:30px;line-height:30px;font-size:13px">0</div>
<div class="fl" style="left:1444px;top:676px;width:57px;height:30px;"></div>
<div class="c" style="left:1444px;top:677px;width:57px;height:30px;line-height:30px;font-size:13px">0</div>
<div class="fl" style="left:1503px;top:676px;width:57px;height:30px;"></div>
<div class="c" style="left:1503px;top:677px;width:57px;height:30px;line-height:30px;font-size:13px">0</div>
<div style="left:1565px;top:680px;width:59px;height:24px;background:linear-gradient(#fff,#f2f2f2);border:1px solid #c8c8c8;border-radius:3px"></div>
<svg style="position:absolute;left:1606px;top:690px" width="9" height="6" viewBox="0 0 9 6"><path d="M0 0 H9 L4.5 5Z" fill="#111"/></svg>
<div style="left:1632px;top:677px;width:50px;height:28px;background:#ececec;border:1px solid #cfcfcf;border-radius:4px"></div>
<svg style="position:absolute;left:1664px;top:688px" width="9" height="6" viewBox="0 0 9 6"><path d="M0 0 H9 L4.5 5Z" fill="#f08a18"/></svg>
<div class="cb" style="left:1706px;top:684px"></div>
<div class="cb" style="left:1754px;top:684px"></div>
<div class="fl" style="left:1787px;top:676px;width:61px;height:30px;"></div>
<div class="c" style="left:1787px;top:677px;width:61px;height:30px;line-height:30px;font-size:13px">0</div>
<div class="cb" style="left:1867px;top:684px"></div>
<div class="hl" style="left:424px;top:707px;width:1473px;height:1px;"></div>
<div class="t" style="left:501px;top:707px;width:636px;height:21px;line-height:21px;font-size:14.4px;overflow:hidden;color:#2b60c4"><span class="u">Кто главный?(0)</span></div>
<div class="t" style="left:1140px;top:707px;height:21px;line-height:21px;font-size:14.4px">Андрей Кодылев</div>
<div class="c" style="left:1357px;top:707px;width:86px;height:21px;line-height:21px;font-size:14.4px">4</div>
<div class="c" style="left:1444px;top:707px;width:57px;height:21px;line-height:21px;font-size:14.4px">0</div>
<div class="c" style="left:1503px;top:707px;width:57px;height:21px;line-height:21px;font-size:14.4px">0</div>
<div class="c" style="left:1563px;top:707px;width:61px;height:21px;line-height:21px;font-size:14.4px">- 0</div>
<svg style="position:absolute;left:1648px;top:711px" width="18" height="16" viewBox="0 0 18 16"><path d="M10.3 2.1 H3.3 Q1.9 2.1 1.9 3.5 V12.4 Q1.9 13.8 3.3 13.8 H13.4 Q14.8 13.8 14.8 12.4 V5.6" fill="none" stroke="#000" stroke-width="2"/><path d="M7 9 L15.4 1.2" stroke="#000" stroke-width="2.5" stroke-linecap="round"/><path d="M5.4 10.5 L7 9" stroke="#000" stroke-width="1.6" stroke-linecap="round"/></svg>
<div class="cb" style="left:1706px;top:710px;border-color:#dcdfea"></div>
<div class="cb" style="left:1754px;top:710px;border-color:#dcdfea"></div>
<div class="c" style="left:1787px;top:707px;width:61px;height:21px;line-height:21px;font-size:14.4px">0</div>
<div class="hl" style="left:424px;top:728px;width:1473px;height:1px;"></div>
<svg style="position:absolute;left:506px;top:730px" width="22" height="17" viewBox="0 0 22 17"><path d="M1 9 Q11 1 21 9 Q11 16 1 9Z" fill="none" stroke="#ccc" stroke-width="1.4"/><path d="M7.5 9 Q7.5 5.5 11 5.5 Q14.5 5.5 14.5 9" fill="none" stroke="#ccc" stroke-width="1.4"/><path d="M3 1 L18 16.5" stroke="#ccc" stroke-width="1.6"/></svg>
<div class="t" style="left:529px;top:728px;width:608px;height:21px;line-height:21px;font-size:14.4px;overflow:hidden;color:#2b60c4"><span class="u">Хочу сайт без багов, это возможно?(0)</span></div>
<div class="t" style="left:1140px;top:728px;height:21px;line-height:21px;font-size:14.4px">Настя Михайлова</div>
<div class="c" style="left:1357px;top:728px;width:86px;height:21px;line-height:21px;font-size:14.4px">5</div>
<div class="c" style="left:1444px;top:728px;width:57px;height:21px;line-height:21px;font-size:14.4px">0</div>
<div class="c" style="left:1503px;top:728px;width:57px;height:21px;line-height:21px;font-size:14.4px">0</div>
<div class="c" style="left:1563px;top:728px;width:61px;height:21px;line-height:21px;font-size:14.4px">- 4</div>
<svg style="position:absolute;left:1648px;top:732px" width="18" height="16" viewBox="0 0 18 16"><path d="M10.3 2.1 H3.3 Q1.9 2.1 1.9 3.5 V12.4 Q1.9 13.8 3.3 13.8 H13.4 Q14.8 13.8 14.8 12.4 V5.6" fill="none" stroke="#000" stroke-width="2"/><path d="M7 9 L15.4 1.2" stroke="#000" stroke-width="2.5" stroke-linecap="round"/><path d="M5.4 10.5 L7 9" stroke="#000" stroke-width="1.6" stroke-linecap="round"/></svg>
<div class="cb" style="left:1706px;top:731px;border-color:#dcdfea"></div>
<div class="cb" style="left:1754px;top:731px;border-color:#dcdfea"></div>
<div class="c" style="left:1787px;top:728px;width:61px;height:21px;line-height:21px;font-size:14.4px">0</div>
<div class="hl" style="left:424px;top:749px;width:1473px;height:1px;"></div>
<div class="t" style="left:501px;top:749px;width:636px;height:21px;line-height:21px;font-size:14.4px;overflow:hidden;color:#2b60c4"><span class="u">Уместно ли избавляться от домашних животных, когда они тебе не нужны?(0)</span></div>
<div class="t" style="left:1140px;top:749px;height:21px;line-height:21px;font-size:14.4px">Илья Мастерков</div>
<div class="c" style="left:1357px;top:749px;width:86px;height:21px;line-height:21px;font-size:14.4px">51</div>
<div class="c" style="left:1444px;top:749px;width:57px;height:21px;line-height:21px;font-size:14.4px">0</div>
<div class="c" style="left:1503px;top:749px;width:57px;height:21px;line-height:21px;font-size:14.4px">0</div>
<div class="c" style="left:1563px;top:749px;width:61px;height:21px;line-height:21px;font-size:14.4px">- 5</div>
<svg style="position:absolute;left:1648px;top:753px" width="18" height="16" viewBox="0 0 18 16"><path d="M10.3 2.1 H3.3 Q1.9 2.1 1.9 3.5 V12.4 Q1.9 13.8 3.3 13.8 H13.4 Q14.8 13.8 14.8 12.4 V5.6" fill="none" stroke="#000" stroke-width="2"/><path d="M7 9 L15.4 1.2" stroke="#000" stroke-width="2.5" stroke-linecap="round"/><path d="M5.4 10.5 L7 9" stroke="#000" stroke-width="1.6" stroke-linecap="round"/></svg>
<div class="cb" style="left:1706px;top:752px;border-color:#dcdfea"></div>
<div class="cb" style="left:1754px;top:752px;border-color:#dcdfea"></div>
<div class="c" style="left:1787px;top:749px;width:61px;height:21px;line-height:21px;font-size:14.4px">0</div>
<div class="hl" style="left:424px;top:770px;width:1473px;height:1px;"></div>
<svg style="position:absolute;left:506px;top:772px" width="22" height="17" viewBox="0 0 22 17"><path d="M1 9 Q11 1 21 9 Q11 16 1 9Z" fill="none" stroke="#ccc" stroke-width="1.4"/><path d="M7.5 9 Q7.5 5.5 11 5.5 Q14.5 5.5 14.5 9" fill="none" stroke="#ccc" stroke-width="1.4"/><path d="M3 1 L18 16.5" stroke="#ccc" stroke-width="1.6"/></svg>
<div class="t" style="left:529px;top:770px;width:608px;height:21px;line-height:21px;font-size:14.4px;overflow:hidden;color:#2b60c4"><span class="u">У нас ошибки-это часть жизни?(0)</span></div>
<div class="t" style="left:1140px;top:770px;height:21px;line-height:21px;font-size:14.4px">Настя Михайлова</div>
<div class="c" style="left:1357px;top:770px;width:86px;height:21px;line-height:21px;font-size:14.4px">51</div>
<div class="c" style="left:1444px;top:770px;width:57px;height:21px;line-height:21px;font-size:14.4px">0</div>
<div class="c" style="left:1503px;top:770px;width:57px;height:21px;line-height:21px;font-size:14.4px">0</div>
<div class="c" style="left:1563px;top:770px;width:61px;height:21px;line-height:21px;font-size:14.4px">- 19</div>
<svg style="position:absolute;left:1648px;top:774px" width="18" height="16" viewBox="0 0 18 16"><path d="M10.3 2.1 H3.3 Q1.9 2.1 1.9 3.5 V12.4 Q1.9 13.8 3.3 13.8 H13.4 Q14.8 13.8 14.8 12.4 V5.6" fill="none" stroke="#000" stroke-width="2"/><path d="M7 9 L15.4 1.2" stroke="#000" stroke-width="2.5" stroke-linecap="round"/><path d="M5.4 10.5 L7 9" stroke="#000" stroke-width="1.6" stroke-linecap="round"/></svg>
<div class="cb" style="left:1706px;top:773px;border-color:#dcdfea"></div>
<div class="cb" style="left:1754px;top:773px;border-color:#dcdfea"></div>
<div class="c" style="left:1787px;top:770px;width:61px;height:21px;line-height:21px;font-size:14.4px">2</div>
<div class="hl" style="left:424px;top:791px;width:1473px;height:1px;"></div>
<div class="t" style="left:501px;top:791px;width:636px;height:21px;line-height:21px;font-size:14.4px;overflow:hidden;color:#2b60c4"><span class="u">видимая политика Трампа и его реальные цели(0)</span></div>
<div class="t" style="left:1140px;top:791px;height:21px;line-height:21px;font-size:14.4px">Георгий Никитин</div>
<div class="c" style="left:1357px;top:791px;width:86px;height:21px;line-height:21px;font-size:14.4px">1119</div>
<div class="c" style="left:1444px;top:791px;width:57px;height:21px;line-height:21px;font-size:14.4px">0</div>
<div class="c" style="left:1503px;top:791px;width:57px;height:21px;line-height:21px;font-size:14.4px">0</div>
<div class="c" style="left:1563px;top:791px;width:61px;height:21px;line-height:21px;font-size:14.4px">- 239</div>
<svg style="position:absolute;left:1648px;top:795px" width="18" height="16" viewBox="0 0 18 16"><path d="M10.3 2.1 H3.3 Q1.9 2.1 1.9 3.5 V12.4 Q1.9 13.8 3.3 13.8 H13.4 Q14.8 13.8 14.8 12.4 V5.6" fill="none" stroke="#000" stroke-width="2"/><path d="M7 9 L15.4 1.2" stroke="#000" stroke-width="2.5" stroke-linecap="round"/><path d="M5.4 10.5 L7 9" stroke="#000" stroke-width="1.6" stroke-linecap="round"/></svg>
<div class="cb" style="left:1706px;top:794px;border-color:#dcdfea"></div>
<div class="cb" style="left:1754px;top:794px;border-color:#dcdfea"></div>
<div class="c" style="left:1787px;top:791px;width:61px;height:21px;line-height:21px;font-size:14.4px">34</div>
<div class="hl" style="left:424px;top:812px;width:1473px;height:1px;"></div>
<div class="t" style="left:424px;top:812px;width:74px;height:21px;line-height:21px;font-size:14.4px;text-align:right">1000</div>
<div class="t" style="left:501px;top:812px;width:636px;height:21px;line-height:21px;font-size:14.4px;overflow:hidden;color:#2b60c4"><span class="u">ищите женщину(0)</span></div>
<div class="t" style="left:1140px;top:812px;height:21px;line-height:21px;font-size:14.4px">Георгий Никитин</div>
<div class="c" style="left:1357px;top:812px;width:86px;height:21px;line-height:21px;font-size:14.4px">4743</div>
<div class="c" style="left:1444px;top:812px;width:57px;height:21px;line-height:21px;font-size:14.4px">1</div>
<div class="c" style="left:1503px;top:812px;width:57px;height:21px;line-height:21px;font-size:14.4px">0</div>
<div class="c" style="left:1563px;top:812px;width:61px;height:21px;line-height:21px;font-size:14.4px">- 526</div>
<svg style="position:absolute;left:1648px;top:816px" width="18" height="16" viewBox="0 0 18 16"><path d="M10.3 2.1 H3.3 Q1.9 2.1 1.9 3.5 V12.4 Q1.9 13.8 3.3 13.8 H13.4 Q14.8 13.8 14.8 12.4 V5.6" fill="none" stroke="#000" stroke-width="2"/><path d="M7 9 L15.4 1.2" stroke="#000" stroke-width="2.5" stroke-linecap="round"/><path d="M5.4 10.5 L7 9" stroke="#000" stroke-width="1.6" stroke-linecap="round"/></svg>
<div class="cb" style="left:1706px;top:815px;border-color:#dcdfea"></div>
<div class="cb" style="left:1754px;top:815px;border-color:#dcdfea"></div>
<div class="c" style="left:1787px;top:812px;width:61px;height:21px;line-height:21px;font-size:14.4px">75</div>
<div class="hl" style="left:424px;top:833px;width:1473px;height:1px;"></div>
<div class="t" style="left:424px;top:833px;width:74px;height:21px;line-height:21px;font-size:14.4px;text-align:right">1000</div>
<div class="t" style="left:501px;top:833px;width:636px;height:21px;line-height:21px;font-size:14.4px;overflow:hidden;color:#2b60c4"><span class="u">ЦБ РФ не выполняет свои конституционные задачи, а решает какие-то свои, а президент, ка</span><span style="color:#333">…</span></div>
<div class="t" style="left:1140px;top:833px;height:21px;line-height:21px;font-size:14.4px">Владимир Цубаренко</div>
<div class="c" style="left:1357px;top:833px;width:86px;height:21px;line-height:21px;font-size:14.4px">9376</div>
<div class="c" style="left:1444px;top:833px;width:57px;height:21px;line-height:21px;font-size:14.4px">0</div>
<div class="c" style="left:1503px;top:833px;width:57px;height:21px;line-height:21px;font-size:14.4px">0</div>
<div class="c" style="left:1563px;top:833px;width:61px;height:21px;line-height:21px;font-size:14.4px">- 1363</div>
<svg style="position:absolute;left:1648px;top:837px" width="18" height="16" viewBox="0 0 18 16"><path d="M10.3 2.1 H3.3 Q1.9 2.1 1.9 3.5 V12.4 Q1.9 13.8 3.3 13.8 H13.4 Q14.8 13.8 14.8 12.4 V5.6" fill="none" stroke="#000" stroke-width="2"/><path d="M7 9 L15.4 1.2" stroke="#000" stroke-width="2.5" stroke-linecap="round"/><path d="M5.4 10.5 L7 9" stroke="#000" stroke-width="1.6" stroke-linecap="round"/></svg>
<div class="cb" style="left:1706px;top:836px;border-color:#dcdfea"></div>
<div class="cb" style="left:1754px;top:836px;border-color:#dcdfea"></div>
<div class="c" style="left:1787px;top:833px;width:61px;height:21px;line-height:21px;font-size:14.4px">194</div>
<div class="hl" style="left:424px;top:854px;width:1473px;height:1px;"></div>
<div class="t" style="left:501px;top:854px;width:636px;height:21px;line-height:21px;font-size:14.4px;overflow:hidden;color:#2b60c4"><span class="u">Не надо военных действий? К сожалению, надо или ответ Усику.(0)</span></div>
<div class="t" style="left:1140px;top:854px;height:21px;line-height:21px;font-size:14.4px">Илья Мастерков</div>
<div class="c" style="left:1357px;top:854px;width:86px;height:21px;line-height:21px;font-size:14.4px">8333</div>
<div class="c" style="left:1444px;top:854px;width:57px;height:21px;line-height:21px;font-size:14.4px">2</div>
<div class="c" style="left:1503px;top:854px;width:57px;height:21px;line-height:21px;font-size:14.4px">0</div>
<div class="c" style="left:1563px;top:854px;width:61px;height:21px;line-height:21px;font-size:14.4px">- 1371</div>
<svg style="position:absolute;left:1648px;top:858px" width="18" height="16" viewBox="0 0 18 16"><path d="M10.3 2.1 H3.3 Q1.9 2.1 1.9 3.5 V12.4 Q1.9 13.8 3.3 13.8 H13.4 Q14.8 13.8 14.8 12.4 V5.6" fill="none" stroke="#000" stroke-width="2"/><path d="M7 9 L15.4 1.2" stroke="#000" stroke-width="2.5" stroke-linecap="round"/><path d="M5.4 10.5 L7 9" stroke="#000" stroke-width="1.6" stroke-linecap="round"/></svg>
<div class="cb" style="left:1706px;top:857px;border-color:#dcdfea"></div>
<div class="cb" style="left:1754px;top:857px;border-color:#dcdfea"></div>
<div class="c" style="left:1787px;top:854px;width:61px;height:21px;line-height:21px;font-size:14.4px">195</div>
<div class="hl" style="left:424px;top:875px;width:1473px;height:1px;"></div>
<div class="t" style="left:424px;top:875px;width:74px;height:21px;line-height:21px;font-size:14.4px;text-align:right">1000</div>
<div class="t" style="left:501px;top:875px;width:636px;height:21px;line-height:21px;font-size:14.4px;overflow:hidden;color:#2b60c4"><span class="u">Прививки от covid-19 не пройдут без последствий(0)</span></div>
<div class="t" style="left:1140px;top:875px;height:21px;line-height:21px;font-size:14.4px">Владимир Цубаренко</div>
<div class="c" style="left:1357px;top:875px;width:86px;height:21px;line-height:21px;font-size:14.4px">8839</div>
<div class="c" style="left:1444px;top:875px;width:57px;height:21px;line-height:21px;font-size:14.4px">1</div>
<div class="c" style="left:1503px;top:875px;width:57px;height:21px;line-height:21px;font-size:14.4px">0</div>
<div class="c" style="left:1563px;top:875px;width:61px;height:21px;line-height:21px;font-size:14.4px">- 1481</div>
<svg style="position:absolute;left:1648px;top:879px" width="18" height="16" viewBox="0 0 18 16"><path d="M10.3 2.1 H3.3 Q1.9 2.1 1.9 3.5 V12.4 Q1.9 13.8 3.3 13.8 H13.4 Q14.8 13.8 14.8 12.4 V5.6" fill="none" stroke="#000" stroke-width="2"/><path d="M7 9 L15.4 1.2" stroke="#000" stroke-width="2.5" stroke-linecap="round"/><path d="M5.4 10.5 L7 9" stroke="#000" stroke-width="1.6" stroke-linecap="round"/></svg>
<div class="cb" style="left:1706px;top:878px;border-color:#dcdfea"></div>
<div class="cb" style="left:1754px;top:878px;border-color:#dcdfea"></div>
<div class="c" style="left:1787px;top:875px;width:61px;height:21px;line-height:21px;font-size:14.4px">211</div>
<div class="hl" style="left:424px;top:896px;width:1473px;height:1px;"></div>
<div class="t" style="left:501px;top:896px;width:636px;height:21px;line-height:21px;font-size:14.4px;overflow:hidden;color:#2b60c4"><span class="u">Жертвы харасмента не могут десятилетиями простить руководителям свои слабости(0)</span></div>
<div class="t" style="left:1140px;top:896px;height:21px;line-height:21px;font-size:14.4px">Валерий Хотиненко</div>
<div class="c" style="left:1357px;top:896px;width:86px;height:21px;line-height:21px;font-size:14.4px">8933</div>
<div class="c" style="left:1444px;top:896px;width:57px;height:21px;line-height:21px;font-size:14.4px">0</div>
<div class="c" style="left:1503px;top:896px;width:57px;height:21px;line-height:21px;font-size:14.4px">0</div>
<div class="c" style="left:1563px;top:896px;width:61px;height:21px;line-height:21px;font-size:14.4px">- 1528</div>
<svg style="position:absolute;left:1648px;top:900px" width="18" height="16" viewBox="0 0 18 16"><path d="M10.3 2.1 H3.3 Q1.9 2.1 1.9 3.5 V12.4 Q1.9 13.8 3.3 13.8 H13.4 Q14.8 13.8 14.8 12.4 V5.6" fill="none" stroke="#000" stroke-width="2"/><path d="M7 9 L15.4 1.2" stroke="#000" stroke-width="2.5" stroke-linecap="round"/><path d="M5.4 10.5 L7 9" stroke="#000" stroke-width="1.6" stroke-linecap="round"/></svg>
<div class="cb" style="left:1706px;top:899px;border-color:#dcdfea"></div>
<div class="cb" style="left:1754px;top:899px;border-color:#dcdfea"></div>
<div class="c" style="left:1787px;top:896px;width:61px;height:21px;line-height:21px;font-size:14.4px">218</div>
<div class="hl" style="left:424px;top:917px;width:1473px;height:1px;"></div>
<div class="t" style="left:501px;top:917px;width:636px;height:21px;line-height:21px;font-size:14.4px;overflow:hidden;color:#2b60c4"><span class="u">Человеческий род продолжается по ошибке(0)</span></div>
<div class="t" style="left:1140px;top:917px;height:21px;line-height:21px;font-size:14.4px">Владимир Цубаренко</div>
<div class="c" style="left:1357px;top:917px;width:86px;height:21px;line-height:21px;font-size:14.4px">9795</div>
<div class="c" style="left:1444px;top:917px;width:57px;height:21px;line-height:21px;font-size:14.4px">0</div>
<div class="c" style="left:1503px;top:917px;width:57px;height:21px;line-height:21px;font-size:14.4px">0</div>
<div class="c" style="left:1563px;top:917px;width:61px;height:21px;line-height:21px;font-size:14.4px">- 1815</div>
<svg style="position:absolute;left:1648px;top:921px" width="18" height="16" viewBox="0 0 18 16"><path d="M10.3 2.1 H3.3 Q1.9 2.1 1.9 3.5 V12.4 Q1.9 13.8 3.3 13.8 H13.4 Q14.8 13.8 14.8 12.4 V5.6" fill="none" stroke="#000" stroke-width="2"/><path d="M7 9 L15.4 1.2" stroke="#000" stroke-width="2.5" stroke-linecap="round"/><path d="M5.4 10.5 L7 9" stroke="#000" stroke-width="1.6" stroke-linecap="round"/></svg>
<div class="cb" style="left:1706px;top:920px;border-color:#dcdfea"></div>
<div class="cb" style="left:1754px;top:920px;border-color:#dcdfea"></div>
<div class="c" style="left:1787px;top:917px;width:61px;height:21px;line-height:21px;font-size:14.4px">259</div>
<div class="hl" style="left:424px;top:938px;width:1473px;height:1px;"></div>
<div class="t" style="left:501px;top:938px;width:636px;height:21px;line-height:21px;font-size:14.4px;overflow:hidden;color:#2b60c4"><span class="u">обсуждение видео: Переживем ли мы глобальное потепление?(0)</span></div>
<div class="t" style="left:1140px;top:938px;height:21px;line-height:21px;font-size:14.4px">Дима Ржевский</div>
<div class="c" style="left:1357px;top:938px;width:86px;height:21px;line-height:21px;font-size:14.4px">5689</div>
<div class="c" style="left:1444px;top:938px;width:57px;height:21px;line-height:21px;font-size:14.4px">0</div>
<div class="c" style="left:1503px;top:938px;width:57px;height:21px;line-height:21px;font-size:14.4px">0</div>
<div class="c" style="left:1563px;top:938px;width:61px;height:21px;line-height:21px;font-size:14.4px">- 1946</div>
<svg style="position:absolute;left:1648px;top:942px" width="18" height="16" viewBox="0 0 18 16"><path d="M10.3 2.1 H3.3 Q1.9 2.1 1.9 3.5 V12.4 Q1.9 13.8 3.3 13.8 H13.4 Q14.8 13.8 14.8 12.4 V5.6" fill="none" stroke="#000" stroke-width="2"/><path d="M7 9 L15.4 1.2" stroke="#000" stroke-width="2.5" stroke-linecap="round"/><path d="M5.4 10.5 L7 9" stroke="#000" stroke-width="1.6" stroke-linecap="round"/></svg>
<div class="cb" style="left:1706px;top:941px;border-color:#dcdfea"></div>
<div class="cb" style="left:1754px;top:941px;border-color:#dcdfea"></div>
<div class="c" style="left:1787px;top:938px;width:61px;height:21px;line-height:21px;font-size:14.4px">278</div>
<div class="hl" style="left:424px;top:959px;width:1473px;height:1px;"></div>
<div class="t" style="left:501px;top:959px;width:636px;height:21px;line-height:21px;font-size:14.4px;overflow:hidden;color:#2b60c4"><span class="u">Конституция стала разменной монетой(0)</span></div>
<div class="t" style="left:1140px;top:959px;height:21px;line-height:21px;font-size:14.4px">Владимир Цубаренко</div>
<div class="c" style="left:1357px;top:959px;width:86px;height:21px;line-height:21px;font-size:14.4px">9773</div>
<div class="c" style="left:1444px;top:959px;width:57px;height:21px;line-height:21px;font-size:14.4px">0</div>
<div class="c" style="left:1503px;top:959px;width:57px;height:21px;line-height:21px;font-size:14.4px">0</div>
<div class="c" style="left:1563px;top:959px;width:61px;height:21px;line-height:21px;font-size:14.4px">- 2008</div>
<svg style="position:absolute;left:1648px;top:963px" width="18" height="16" viewBox="0 0 18 16"><path d="M10.3 2.1 H3.3 Q1.9 2.1 1.9 3.5 V12.4 Q1.9 13.8 3.3 13.8 H13.4 Q14.8 13.8 14.8 12.4 V5.6" fill="none" stroke="#000" stroke-width="2"/><path d="M7 9 L15.4 1.2" stroke="#000" stroke-width="2.5" stroke-linecap="round"/><path d="M5.4 10.5 L7 9" stroke="#000" stroke-width="1.6" stroke-linecap="round"/></svg>
<div class="cb" style="left:1706px;top:962px;border-color:#dcdfea"></div>
<div class="cb" style="left:1754px;top:962px;border-color:#dcdfea"></div>
<div class="c" style="left:1787px;top:959px;width:61px;height:21px;line-height:21px;font-size:14.4px">286</div>
<div class="hl" style="left:424px;top:980px;width:1473px;height:1px;"></div>
<div class="t" style="left:501px;top:980px;width:636px;height:21px;line-height:21px;font-size:14.4px;overflow:hidden;color:#2b60c4"><span class="u">Covid-19: самоизоляция лишь групп риска будет эффективнее всеобщей самоизоляции(0)</span></div>
<div class="t" style="left:1140px;top:980px;height:21px;line-height:21px;font-size:14.4px">Юрий Юрченко</div>
<div class="c" style="left:1357px;top:980px;width:86px;height:21px;line-height:21px;font-size:14.4px">10659</div>
<div class="c" style="left:1444px;top:980px;width:57px;height:21px;line-height:21px;font-size:14.4px">5</div>
<div class="c" style="left:1503px;top:980px;width:57px;height:21px;line-height:21px;font-size:14.4px">0</div>
<div class="c" style="left:1563px;top:980px;width:61px;height:21px;line-height:21px;font-size:14.4px">- 2067</div>
<svg style="position:absolute;left:1648px;top:984px" width="18" height="16" viewBox="0 0 18 16"><path d="M10.3 2.1 H3.3 Q1.9 2.1 1.9 3.5 V12.4 Q1.9 13.8 3.3 13.8 H13.4 Q14.8 13.8 14.8 12.4 V5.6" fill="none" stroke="#000" stroke-width="2"/><path d="M7 9 L15.4 1.2" stroke="#000" stroke-width="2.5" stroke-linecap="round"/><path d="M5.4 10.5 L7 9" stroke="#000" stroke-width="1.6" stroke-linecap="round"/></svg>
<div class="cb" style="left:1706px;top:983px;border-color:#dcdfea"></div>
<div class="cb" style="left:1754px;top:983px;border-color:#dcdfea"></div>
<div class="c" style="left:1787px;top:980px;width:61px;height:21px;line-height:21px;font-size:14.4px">295</div>
<div class="hl" style="left:424px;top:1001px;width:1473px;height:1px;"></div>
<div class="t" style="left:501px;top:1001px;width:636px;height:21px;line-height:21px;font-size:14.4px;overflow:hidden;color:#2b60c4"><span class="u">Половые партнеры обязательно разругаются до ненависти(0)</span></div>
<div class="t" style="left:1140px;top:1001px;height:21px;line-height:21px;font-size:14.4px">Владимир Цубаренко</div>
<div class="c" style="left:1357px;top:1001px;width:86px;height:21px;line-height:21px;font-size:14.4px">10606</div>
<div class="c" style="left:1444px;top:1001px;width:57px;height:21px;line-height:21px;font-size:14.4px">0</div>
<div class="c" style="left:1503px;top:1001px;width:57px;height:21px;line-height:21px;font-size:14.4px">0</div>
<div class="c" style="left:1563px;top:1001px;width:61px;height:21px;line-height:21px;font-size:14.4px">- 2157</div>
<svg style="position:absolute;left:1648px;top:1005px" width="18" height="16" viewBox="0 0 18 16"><path d="M10.3 2.1 H3.3 Q1.9 2.1 1.9 3.5 V12.4 Q1.9 13.8 3.3 13.8 H13.4 Q14.8 13.8 14.8 12.4 V5.6" fill="none" stroke="#000" stroke-width="2"/><path d="M7 9 L15.4 1.2" stroke="#000" stroke-width="2.5" stroke-linecap="round"/><path d="M5.4 10.5 L7 9" stroke="#000" stroke-width="1.6" stroke-linecap="round"/></svg>
<div class="cb" style="left:1706px;top:1004px;border-color:#dcdfea"></div>
<div class="cb" style="left:1754px;top:1004px;border-color:#dcdfea"></div>
<div class="c" style="left:1787px;top:1001px;width:61px;height:21px;line-height:21px;font-size:14.4px">308</div>
<div class="hl" style="left:424px;top:1022px;width:1473px;height:1px;"></div>
<div class="t" style="left:501px;top:1022px;width:636px;height:21px;line-height:21px;font-size:14.4px;overflow:hidden;color:#2b60c4"><span class="u">нужно ли лекарство от старения(2)</span></div>
<div class="t" style="left:1140px;top:1022px;height:21px;line-height:21px;font-size:14.4px">Дима Ржевский</div>
<div class="c" style="left:1357px;top:1022px;width:86px;height:21px;line-height:21px;font-size:14.4px">24917</div>
<div class="c" style="left:1444px;top:1022px;width:57px;height:21px;line-height:21px;font-size:14.4px">1</div>
<div class="c" style="left:1503px;top:1022px;width:57px;height:21px;line-height:21px;font-size:14.4px">0</div>
<div class="c" style="left:1563px;top:1022px;width:61px;height:21px;line-height:21px;font-size:14.4px">- 1972</div>
<svg style="position:absolute;left:1648px;top:1026px" width="18" height="16" viewBox="0 0 18 16"><path d="M10.3 2.1 H3.3 Q1.9 2.1 1.9 3.5 V12.4 Q1.9 13.8 3.3 13.8 H13.4 Q14.8 13.8 14.8 12.4 V5.6" fill="none" stroke="#000" stroke-width="2"/><path d="M7 9 L15.4 1.2" stroke="#000" stroke-width="2.5" stroke-linecap="round"/><path d="M5.4 10.5 L7 9" stroke="#000" stroke-width="1.6" stroke-linecap="round"/></svg>
<div class="cb" style="left:1706px;top:1025px;border-color:#dcdfea"></div>
<div class="cb" style="left:1754px;top:1025px;border-color:#dcdfea"></div>
<div class="c" style="left:1787px;top:1022px;width:61px;height:21px;line-height:21px;font-size:14.4px">155</div>
<div class="vl" style="left:499px;top:676px;width:1px;height:356px;"></div>
<div class="vl" style="left:1138px;top:676px;width:1px;height:356px;"></div>
<div class="vl" style="left:1356px;top:676px;width:1px;height:356px;"></div>
<div class="vl" style="left:1443px;top:676px;width:1px;height:356px;"></div>
<div class="vl" style="left:1502px;top:676px;width:1px;height:356px;"></div>
<div class="vl" style="left:1562px;top:676px;width:1px;height:356px;"></div>
<div class="vl" style="left:1625px;top:676px;width:1px;height:356px;"></div>
<div class="vl" style="left:1690px;top:676px;width:1px;height:356px;"></div>
<div class="vl" style="left:1738px;top:676px;width:1px;height:356px;"></div>
<div class="vl" style="left:1786px;top:676px;width:1px;height:356px;"></div>
<div class="vl" style="left:1849px;top:676px;width:1px;height:356px;"></div>
<div style="left:1905px;top:87px;width:15px;height:945px;background:#2b2b2b"></div>
<svg style="position:absolute;left:1908px;top:91px" width="9" height="8" viewBox="0 0 9 8"><path d="M0 8 L4.5 0 L9 8Z" fill="#a3a3a3"/></svg>
<div style="left:1908px;top:105px;width:9px;height:766px;background:#a0a0a0;border-radius:5px"></div>
<svg style="position:absolute;left:1908px;top:1021px" width="9" height="8" viewBox="0 0 9 8"><path d="M0 0 L4.5 8 L9 0Z" fill="#a3a3a3"/></svg>
<div style="left:0px;top:1032px;width:1920px;height:48px;background:#1c1c1c"></div>
<svg style="position:absolute;left:18px;top:1044px" width="28" height="20" viewBox="0 0 28 20"><path d="M5 18 Q0 18 1 13 Q2 9 7 10 Q8 4 15 4 Q22 4 23 10 Q27 11 26 15 Q25 18 22 18 Z" fill="#a8c8f0"/><path d="M5 18 Q0 18 1 13 Q3 15 8 15 L22 15 Q25 15 26 14 Q25 18 22 18Z" fill="#7fa6d8"/></svg>
<div style="left:30px;top:1038px;width:16px;height:16px;background:#f28b94;border-radius:50%;color:#111;font-size:11px;line-height:16px;text-align:center">1</div>
<div class="t" style="left:50px;top:1041px;font-size:12px;line-height:14px;color:#fff">2°C</div>
<div class="t" style="left:50px;top:1057px;font-size:12px;line-height:14px;color:#d0d0d0">Облачно</div>
<svg style="position:absolute;left:617px;top:1045px" width="23" height="23" viewBox="0 0 23 23"><defs><linearGradient id="wg" x1="0" y1="0" x2="1" y2="1"><stop offset="0" stop-color="#6cd3ff"/><stop offset="1" stop-color="#1a8fe8"/></linearGradient></defs><rect x="0" y="0" width="11" height="11" rx="1" fill="url(#wg)"/><rect x="12" y="0" width="11" height="11" rx="1" fill="url(#wg)"/><rect x="0" y="12" width="11" height="11" rx="1" fill="url(#wg)"/><rect x="12" y="12" width="11" height="11" rx="1" fill="url(#wg)"/></svg>
<div style="left:653px;top:1040px;width:220px;height:32px;background:#333336;border:1px solid #454545;border-radius:16px"></div>
<svg style="position:absolute;left:664px;top:1049px" width="16" height="16" viewBox="0 0 16 16"><circle cx="6.5" cy="6.5" r="5" fill="none" stroke="#e0e0e0" stroke-width="1.6"/><path d="M10.2 10.2 L14.5 14.5" stroke="#e0e0e0" stroke-width="1.8"/></svg>
<div class="t" style="left:690px;top:1047px;font-size:14px;line-height:18px;color:#c8c8c8">Поиск</div>
<svg style="position:absolute;left:822px;top:1043px" width="46" height="27" viewBox="0 0 46 27"><ellipse cx="23" cy="21" rx="21" ry="5" fill="#7fd0d8"/><path d="M8 8 Q14 2 22 4 Q32 6 36 14 L30 16 Q20 14 14 10 Z" fill="#d8ccc0"/><path d="M6 6 L10 10" stroke="#c33" stroke-width="2"/><path d="M22 15 L18 24 M26 16 L30 24" stroke="#333" stroke-width="1"/></svg>
<div style="left:885px;top:1048px;width:18px;height:16px;background:#6a6a6a;border-radius:2px"></div>
<div style="left:891px;top:1044px;width:17px;height:16px;background:#e8e8e8;border-radius:2px"></div>
<svg style="position:absolute;left:929px;top:1044px" width="25" height="22" viewBox="0 0 25 22"><path d="M0 2 Q0 0 2 0 L9 0 L11 3 L25 3 L25 22 L0 22Z" fill="#e8a800"/><rect x="0" y="5" width="25" height="17" fill="#ffd34e"/><rect x="5" y="14" width="15" height="6" rx="1" fill="#1c6fd1"/></svg>
<svg style="position:absolute;left:973px;top:1044px" width="24" height="24" viewBox="0 0 24 24"><path d="M12 2 A10 10 0 1 1 5.5 19.5 L2 21 L3.5 17.5 A10 10 0 0 1 12 2Z" fill="none" stroke="#25d366" stroke-width="2.2"/><path d="M8 8 Q8 6 9.5 6.5 L10.5 9 L9.5 10 Q11 13 14 14.5 L15 13.5 L17.5 14.5 Q17.5 17 15.5 17 Q11 17 7.5 12 Q7 10 8 8Z" fill="#25d366"/></svg>
<svg style="position:absolute;left:1017px;top:1044px" width="24" height="24" viewBox="0 0 24 24"><circle cx="12" cy="12" r="11.5" fill="#2aa3e0"/><path d="M5 11.5 L17.5 6.5 L15.5 17 L11.5 14 L9.8 16 L10 12.8 L15 8.5 L9 12 Z" fill="#fff"/></svg>
<svg style="position:absolute;left:1061px;top:1044px" width="24" height="24" viewBox="0 0 24 24"><circle cx="12" cy="12" r="11.5" fill="#fff"/><path d="M7 5 L12 13 L12 20 M17 5 L12 13" fill="none" stroke="#fc3f1d" stroke-width="2.8"/></svg>
<svg style="position:absolute;left:1104px;top:1046px" width="27" height="19" viewBox="0 0 27 19"><rect x="0" y="0" width="27" height="19" rx="5" fill="#f00"/><path d="M10.5 5 L18 9.5 L10.5 14Z" fill="#fff"/></svg>
<div style="left:1140px;top:1036px;width:42px;height:40px;background:#2e2e2e;border-radius:5px"></div>
<svg style="position:absolute;left:1149px;top:1044px" width="24" height="24" viewBox="0 0 24 24"><circle cx="12" cy="12" r="11.5" fill="#db4437"/><path d="M12 12 L1.8 17.9 A11.5 11.5 0 0 1 2 6 Z" fill="#0f9d58"/><path d="M12 12 L22.2 17.8 A11.5 11.5 0 0 1 1.8 17.9 Z" fill="#0f9d58"/><path d="M12 12 L22.2 6 A11.5 11.5 0 0 1 12 23.5 Z" fill="#ffcd40"/><circle cx="12" cy="12" r="5.5" fill="#fff"/><circle cx="12" cy="12" r="4.3" fill="#1a73e8"/></svg>
<div style="left:1152px;top:1073px;width:18px;height:3px;background:#f08a78;border-radius:2px"></div>
<svg style="position:absolute;left:1193px;top:1044px" width="24" height="24" viewBox="0 0 24 24"><circle cx="12" cy="12" r="11.5" fill="#1b9de2"/><path d="M3 15 Q4 6 12 5 Q20 5 21 12 Q21 15 17 15 L8 15 Q9 19 14 19 Q17 19 19 18 Q16 23 11 23 Q4 22 3 15Z" fill="#37c46a"/><ellipse cx="13" cy="12" rx="4" ry="2" fill="#1b9de2"/></svg>
<svg style="position:absolute;left:1237px;top:1044px" width="24" height="24" viewBox="0 0 24 24"><circle cx="12" cy="12" r="9" fill="none" stroke="#8c97a5" stroke-width="5" stroke-dasharray="3.5 2.2"/><circle cx="12" cy="12" r="7" fill="#8c97a5"/><circle cx="12" cy="12" r="3.5" fill="#1c1c1c"/><circle cx="12" cy="12" r="2.5" fill="#4ea3f0"/></svg>
<svg style="position:absolute;left:1281px;top:1045px" width="24" height="22" viewBox="0 0 24 22"><rect x="6" y="0" width="18" height="22" rx="2" fill="#21a366"/><rect x="6" y="7" width="18" height="8" fill="#107c41"/><rect x="0" y="4" width="13" height="14" rx="2" fill="#185c37"/><path d="M3 7 L10 15 M10 7 L3 15" stroke="#fff" stroke-width="1.8"/></svg>
<div style="left:1288px;top:1073px;width:8px;height:3px;background:#8a8a8a;border-radius:2px"></div>
<svg style="position:absolute;left:1689px;top:1052px" width="12" height="8" viewBox="0 0 12 8"><path d="M1 7 L6 2 L11 7" fill="none" stroke="#fff" stroke-width="1.4"/></svg>
<div class="t" style="left:1721px;top:1050px;font-size:12px;line-height:14px;color:#fff">ENG</div>
<svg style="position:absolute;left:1762px;top:1047px" width="18" height="17" viewBox="0 0 18 17"><rect x="1" y="1" width="11" height="10" fill="none" stroke="#fff" stroke-width="1.1"/><path d="M4 14 H9 M6.5 11 V14" stroke="#fff" stroke-width="1.1"/><rect x="13" y="0.6" width="3.5" height="5" rx="1" fill="none" stroke="#fff" stroke-width="1"/><path d="M14.7 5.6 V16" stroke="#fff" stroke-width="1.1"/></svg>
<svg style="position:absolute;left:1786px;top:1049px" width="18" height="14" viewBox="0 0 18 14"><path d="M1 4.5 H4 L8 1 V13 L4 9.5 H1Z" fill="none" stroke="#fff" stroke-width="1.1"/><path d="M11 5 L16 10 M16 5 L11 10" stroke="#fff" stroke-width="1.1"/></svg>
<div class="t" style="left:1848px;top:1041px;font-size:12px;line-height:14px;color:#fff;text-align:right">15:41</div>
<div class="t" style="left:1819px;top:1057px;font-size:12px;line-height:14px;color:#fff">03.12.2025</div>
<svg style="position:absolute;left:1884px;top:1048px" width="16" height="17" viewBox="0 0 16 17"><path d="M3 12 V7 Q3 2 8 2 Q13 2 13 7 V12 L14.5 13.5 H1.5 Z M6 14.5 Q8 16.5 10 14.5" fill="none" stroke="#fff" stroke-width="1.2"/></svg>
<div style="left:111px;top:41px;width:227px;height:56px;border:6px solid #d2514a;border-radius:3px"></div>
<div style="left:464px;top:206px;width:147px;height:251px;border:6px solid #d2514a;border-radius:3px"></div>
</body></html>
